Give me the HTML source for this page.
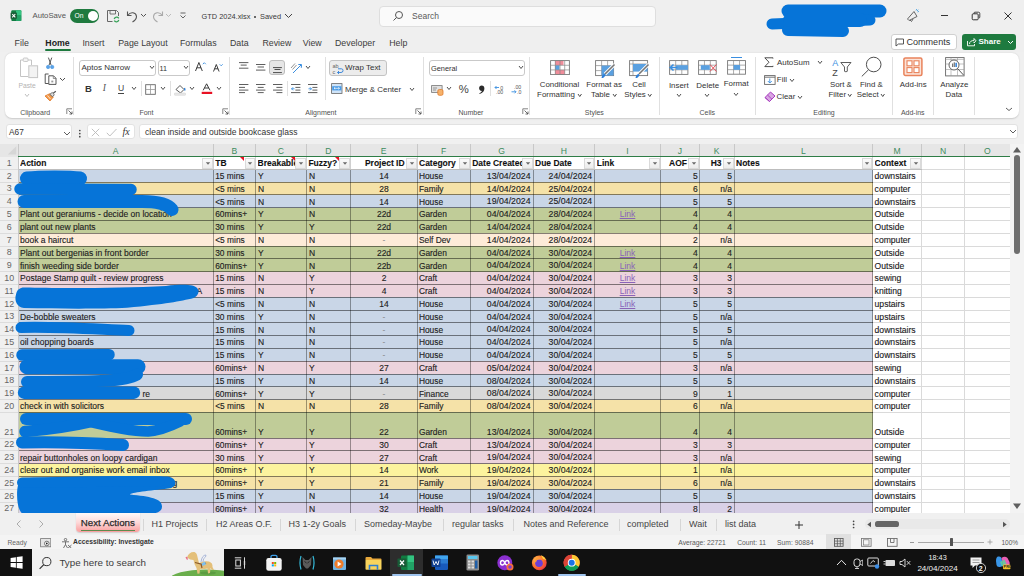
<!DOCTYPE html><html><head><meta charset="utf-8"><style>
html,body{margin:0;padding:0;width:1024px;height:576px;overflow:hidden;background:#f0f0f0;font-family:"Liberation Sans",sans-serif;}
.t{position:absolute;white-space:nowrap;}
.b{position:absolute;}
</style></head><body>
<div class="b" style="left:0.00px;top:0.00px;width:1024.00px;height:52.00px;background:#efefef"></div>
<svg class="b" style="left:9.00px;top:9.00px;" width="14" height="14" viewBox="0 0 14 14"><rect x="2.3" y="1.3" width="10" height="10.7" rx="1" fill="#107c41"/><rect x="7" y="1.3" width="5.3" height="5.3" fill="#33c481"/><rect x="7" y="6.6" width="5.3" height="5.4" fill="#21a366"/><rect x="1.6" y="3.5" width="6.3" height="6.3" rx="0.6" fill="#185c37"/><path d="M3.2,5 L6.3,8.4 M6.3,5 L3.2,8.4" stroke="#fff" stroke-width="1.1"/></svg>
<div class="t" style="left:32.50px;top:12.26px;font-size:7.73px;line-height:7.73px;color:#555;font-weight:normal;">AutoSave</div>
<div class="b" style="left:70.00px;top:8.80px;width:29.00px;height:14.00px;background:#1f7a3f;border-radius:7px"></div>
<div class="t" style="left:74.60px;top:13.29px;font-size:6.75px;line-height:6.75px;color:#ffffff;font-weight:normal;">On</div>
<div class="b" style="left:87.50px;top:11.00px;width:10.00px;height:10.00px;background:#fff;border-radius:50%"></div>
<svg class="b" style="left:106.00px;top:9.00px;" width="15" height="14" viewBox="0 0 15 14"><path d="M1.5,1.5 H10.5 L12.5,3.5 V7 M1.5,1.5 V12.5 H6.5" fill="none" stroke="#666" stroke-width="1"/><path d="M4,1.5 V5 H9.5 V1.5" fill="none" stroke="#666" stroke-width="0.9"/><path d="M8.2,10 A2.6,2.6 0 0 1 12.8,9.3 M12.8,11 A2.6,2.6 0 0 1 8.2,11.7" fill="none" stroke="#3aa35a" stroke-width="1.3"/></svg>
<svg class="b" style="left:125.00px;top:9.00px;" width="14" height="14" viewBox="0 0 14 14"><path d="M2.5,2.5 V6.5 H6.5" fill="none" stroke="#555" stroke-width="1.1"/><path d="M3,6 C5.5,2.5 11,3 11.5,7.5 C11.5,9.5 10,11.5 7.5,13" fill="none" stroke="#555" stroke-width="1.1"/></svg>
<svg class="b" style="left:140.00px;top:13.00px;" width="7" height="5" viewBox="0 0 7 5"><path d="M1,1 L3.5,3.5 L6,1" fill="none" stroke="#555" stroke-width="1"/></svg>
<svg class="b" style="left:151.00px;top:9.00px;" width="14" height="14" viewBox="0 0 14 14"><path d="M11.5,2.5 V6.5 H7.5" fill="none" stroke="#aaa" stroke-width="1.1"/><path d="M11,6 C8.5,2.5 3,3 2.5,7.5 C2.5,9.5 4,11.5 6.5,13" fill="none" stroke="#aaa" stroke-width="1.1"/></svg>
<svg class="b" style="left:165.00px;top:13.00px;" width="7" height="5" viewBox="0 0 7 5"><path d="M1,1 L3.5,3.5 L6,1" fill="none" stroke="#bbb" stroke-width="1"/></svg>
<svg class="b" style="left:178.50px;top:11.00px;" width="8" height="9" viewBox="0 0 8 9"><path d="M1.5,2 H6.5" stroke="#555" stroke-width="0.9"/><path d="M1.5,4.5 L4,7 L6.5,4.5" fill="none" stroke="#555" stroke-width="0.9"/></svg>
<div class="t" style="left:201.60px;top:12.75px;font-size:7.38px;line-height:7.38px;color:#3a3a3a;font-weight:normal;">GTD 2024.xlsx</div>
<div class="b" style="left:254.00px;top:15.50px;width:2.20px;height:2.20px;background:#3a3a3a;border-radius:50%"></div>
<div class="t" style="left:260.00px;top:12.73px;font-size:7.41px;line-height:7.41px;color:#3a3a3a;font-weight:normal;">Saved</div>
<svg class="b" style="left:284.00px;top:13.00px;" width="9" height="6" viewBox="0 0 9 6"><path d="M1,1 L4.5,4.5 L8,1" fill="none" stroke="#444" stroke-width="1"/></svg>
<div class="b" style="left:379.00px;top:5.50px;width:277.00px;height:21.00px;background:#fafafa;border:1px solid #dedede;border-radius:4px;box-sizing:border-box"></div>
<svg class="b" style="left:392.00px;top:10.00px;" width="12" height="12" viewBox="0 0 12 12"><circle cx="7" cy="5" r="3.5" fill="none" stroke="#555" stroke-width="1"/><path d="M4.5,7.5 L1.5,10.5" stroke="#555" stroke-width="1"/></svg>
<div class="t" style="left:412.00px;top:11.79px;font-size:8.52px;line-height:8.52px;color:#5a5a5a;font-weight:normal;">Search</div>
<svg class="b" style="left:750.00px;top:0.00px;" width="150" height="45" viewBox="0 0 150 45"><g fill="none" stroke="#0674d8" stroke-linecap="round" stroke-linejoin="round"><path d="M 38,11 L 130,11" stroke-width="13"/><path d="M 22,24 L 120,20" stroke-width="11"/><path d="M 38,30 L 93,31" stroke-width="12"/><path d="M 40,20 L 110,20" stroke-width="14"/></g></svg>
<svg class="b" style="left:905.00px;top:8.00px;" width="16" height="15" viewBox="0 0 16 15"><path d="M2.5,11 L9,3.5 L12,8.5 L4,12.5 Z" fill="none" stroke="#555" stroke-width="0.9" stroke-linejoin="round"/><path d="M5,12 L6.5,13.5 L8,11" fill="none" stroke="#555" stroke-width="0.9"/><path d="M11,2.5 L11.8,1 M12.5,4 L14,3.3 M12,3 L13.3,1.7" stroke="#3a9ae0" stroke-width="0.8"/></svg>
<div class="b" style="left:940.50px;top:15.00px;width:7.00px;height:1.00px;background:#333"></div>
<svg class="b" style="left:970.00px;top:10.00px;" width="12" height="12" viewBox="0 0 12 12"><rect x="2.2" y="3.8" width="6" height="6" rx="1" fill="none" stroke="#333" stroke-width="1"/><path d="M4,3.8 V3 Q4,2.2 5,2.2 H8.5 Q9.8,2.2 9.8,3.5 V7 Q9.8,8 9,8" fill="none" stroke="#333" stroke-width="0.9"/></svg>
<svg class="b" style="left:1002.00px;top:10.00px;" width="12" height="12" viewBox="0 0 12 12"><path d="M2.5,2.5 L9.5,9.5 M9.5,2.5 L2.5,9.5" stroke="#333" stroke-width="1"/></svg>
<div class="t" style="left:14.60px;top:38.55px;font-size:8.8px;line-height:8.8px;color:#3c3c3c;font-weight:normal;">File</div>
<div class="t" style="left:45.30px;top:38.57px;font-size:8.78px;line-height:8.78px;color:#222;font-weight:bold;">Home</div>
<div class="t" style="left:82.40px;top:38.55px;font-size:8.8px;line-height:8.8px;color:#3c3c3c;font-weight:normal;">Insert</div>
<div class="t" style="left:118.20px;top:38.55px;font-size:8.8px;line-height:8.8px;color:#3c3c3c;font-weight:normal;">Page Layout</div>
<div class="t" style="left:180.00px;top:38.55px;font-size:8.8px;line-height:8.8px;color:#3c3c3c;font-weight:normal;">Formulas</div>
<div class="t" style="left:230.00px;top:38.55px;font-size:8.8px;line-height:8.8px;color:#3c3c3c;font-weight:normal;">Data</div>
<div class="t" style="left:262.40px;top:38.55px;font-size:8.8px;line-height:8.8px;color:#3c3c3c;font-weight:normal;">Review</div>
<div class="t" style="left:302.80px;top:38.55px;font-size:8.8px;line-height:8.8px;color:#3c3c3c;font-weight:normal;">View</div>
<div class="t" style="left:335.00px;top:38.55px;font-size:8.8px;line-height:8.8px;color:#3c3c3c;font-weight:normal;">Developer</div>
<div class="t" style="left:389.20px;top:38.55px;font-size:8.8px;line-height:8.8px;color:#3c3c3c;font-weight:normal;">Help</div>
<div class="b" style="left:45.00px;top:48.50px;width:25.50px;height:2.20px;background:#1e7a3f;border-radius:1px"></div>
<div class="b" style="left:890.50px;top:34.30px;width:66.20px;height:15.50px;background:#fff;border:1px solid #d0d0d0;border-radius:3px;box-sizing:border-box"></div>
<svg class="b" style="left:895.00px;top:37.50px;" width="10" height="9" viewBox="0 0 10 9"><path d="M1,1 H8.5 V6 H3.5 L1,8 Z" fill="none" stroke="#444" stroke-width="0.9"/></svg>
<div class="t" style="left:906.40px;top:37.51px;font-size:9.08px;line-height:9.08px;color:#333;font-weight:normal;">Comments</div>
<div class="b" style="left:962.30px;top:34.30px;width:53.40px;height:15.50px;background:#1e7a3f;border-radius:3px"></div>
<svg class="b" style="left:966.00px;top:37.00px;" width="11" height="10" viewBox="0 0 11 10"><path d="M1.5,4 V8.8 H8.5 V7" fill="none" stroke="#fff" stroke-width="0.9"/><path d="M3.5,7 C3.5,4.5 5.5,3.5 8,3.5 V1.5 L10,3.8 L8,6 V4.8" fill="none" stroke="#fff" stroke-width="0.9"/></svg>
<div class="t" style="left:978.50px;top:38.44px;font-size:7.99px;line-height:7.99px;color:#fff;font-weight:bold;">Share</div>
<svg class="b" style="left:1007.00px;top:40.00px;" width="7" height="5" viewBox="0 0 7 5"><path d="M1,1 L3.5,3.5 L6,1" fill="none" stroke="#fff" stroke-width="1"/></svg>
<div class="b" style="left:5.30px;top:52.80px;width:1013.50px;height:65.00px;background:#fff;border-radius:7px;box-shadow:0 0.8px 1.6px rgba(0,0,0,0.16)"></div>
<svg class="b" style="left:19.00px;top:57.00px;" width="20" height="22" viewBox="0 0 20 22"><path d="M1.5,3 H4 M9,3 H12.5 V8" fill="none" stroke="#c4c4c4" stroke-width="1"/><path d="M1.5,3 V19.5 H9" fill="none" stroke="#c4c4c4" stroke-width="1"/><rect x="4.2" y="1" width="4.8" height="3.5" rx="1" fill="#f3f3f3" stroke="#c4c4c4" stroke-width="0.9"/><rect x="9.8" y="8.8" width="8.8" height="11.8" fill="#f3f3f3" stroke="#c4c4c4" stroke-width="1"/></svg>
<div class="t" style="left:18.50px;top:82.54px;font-size:6.69px;line-height:6.69px;color:#b3b3b3;font-weight:normal;">Paste</div>
<svg class="b" style="left:23.90px;top:93.30px;" width="6" height="5" viewBox="0 0 6 5"><path d="M1,1 L3.0,3.5 L5,1" fill="none" stroke="#bbb" stroke-width="0.95"/></svg>
<svg class="b" style="left:44.00px;top:56.50px;" width="12" height="12.5" viewBox="0 0 12 12.5"><path d="M4.4,0.6 L7.2,8.3 M7.8,0.6 L5,8.3" stroke="#444" stroke-width="0.9"/><circle cx="4.1" cy="10" r="1.7" fill="#5ba3e8" stroke="#3a8ee0" stroke-width="0.5"/><circle cx="8.2" cy="10" r="1.7" fill="#5ba3e8" stroke="#3a8ee0" stroke-width="0.5"/></svg>
<svg class="b" style="left:44.00px;top:73.00px;" width="13" height="12.5" viewBox="0 0 13 12.5"><path d="M4.6,1 H1.2 V10.5 H4.6" fill="none" stroke="#444" stroke-width="0.9"/><path d="M4.8,2.8 H9.5 L12,5.3 V11.4 H4.8 Z" fill="#fff" stroke="#444" stroke-width="0.9"/><path d="M9.3,2.8 V5.5 H12" fill="none" stroke="#666" stroke-width="0.7"/><rect x="7.3" y="7.6" width="2" height="1.8" fill="#999"/></svg>
<svg class="b" style="left:59.00px;top:77.00px;" width="7" height="5" viewBox="0 0 7 5"><path d="M1,1 L3.5,3.5 L6,1" fill="none" stroke="#444" stroke-width="0.95"/></svg>
<svg class="b" style="left:44.00px;top:90.00px;" width="13" height="12" viewBox="0 0 13 12"><path d="M1,6 L5.5,3.8 L9.3,7 L6,11 Z" fill="#f39a4a" stroke="#e0782a" stroke-width="0.8" stroke-linejoin="round"/><path d="M3.5,5.5 L6.5,9" stroke="#fff" stroke-width="0.7"/><path d="M5.8,4.3 L8.2,2.5 L10.3,4.6 L8.6,6.8 Z" fill="#ddd" stroke="#555" stroke-width="0.8"/><path d="M9.2,3.3 L11.8,1.2" stroke="#555" stroke-width="1.2"/></svg>
<div class="t" style="left:-64.85px;width:200px;text-align:center;top:108.77px;font-size:7.0px;line-height:7.0px;color:#505050;font-weight:normal;">Clipboard</div>
<svg class="b" style="left:65.50px;top:108.00px;" width="7" height="7" viewBox="0 0 7 7"><path d="M0.8,6 V0.8 H6" fill="none" stroke="#666" stroke-width="0.8"/><path d="M2.5,2.5 L6,6 M6,3.5 V6 H3.5" fill="none" stroke="#444" stroke-width="0.8"/></svg>
<div class="b" style="left:73.15px;top:56.50px;width:0.70px;height:58.00px;background:#e0e0e0"></div>
<div class="b" style="left:79.40px;top:59.50px;width:76.20px;height:16.20px;border:0.9px solid #c9c9c9;border-radius:3px;box-sizing:border-box;background:#fff"></div>
<div class="t" style="left:81.50px;top:64.22px;font-size:8.01px;line-height:8.01px;color:#333;font-weight:normal;">Aptos Narrow</div>
<svg class="b" style="left:149.00px;top:65.10px;" width="6" height="5" viewBox="0 0 6 5"><path d="M1,1 L3.0,3.5 L5,1" fill="none" stroke="#444" stroke-width="0.95"/></svg>
<div class="b" style="left:157.60px;top:59.50px;width:32.90px;height:16.20px;border:0.9px solid #c9c9c9;border-radius:3px;box-sizing:border-box;background:#fff"></div>
<div class="t" style="left:159.50px;top:64.88px;font-size:7.23px;line-height:7.23px;color:#333;font-weight:normal;">11</div>
<svg class="b" style="left:183.20px;top:65.10px;" width="6" height="5" viewBox="0 0 6 5"><path d="M1,1 L3.0,3.5 L5,1" fill="none" stroke="#444" stroke-width="0.95"/></svg>
<svg class="b" style="left:193.50px;top:61.00px;" width="13" height="11" viewBox="0 0 13 11"><path d="M1.5,10 L4.9,1.5 L8.3,10 M2.8,6.8 H7" fill="none" stroke="#333" stroke-width="0.95"/><path d="M8.8,3.2 L10.3,1.7 L11.8,3.2" fill="none" stroke="#3a8ee0" stroke-width="0.9"/></svg>
<svg class="b" style="left:211.50px;top:62.50px;" width="12" height="9" viewBox="0 0 12 9"><path d="M1.5,8.5 L4.3,1.5 L7.1,8.5 M2.6,5.8 H6" fill="none" stroke="#333" stroke-width="0.95"/><path d="M7.7,1.3 L9.2,2.8 L10.7,1.3" fill="none" stroke="#3a8ee0" stroke-width="0.9"/></svg>
<div class="t" style="left:85.00px;top:83.96px;font-size:9.5px;line-height:9.5px;color:#333;font-weight:bold;">B</div>
<div class="t" style="left:102.80px;top:83.96px;font-size:9.5px;line-height:9.5px;color:#555;font-weight:normal;font-style:italic;font-family:Liberation Serif,serif">I</div>
<div class="t" style="left:118.00px;top:84.12px;font-size:8.6px;line-height:8.6px;color:#444;font-weight:normal;">U</div>
<div class="b" style="left:118.00px;top:92.80px;width:6.20px;height:0.80px;background:#444"></div>
<svg class="b" style="left:131.20px;top:86.40px;" width="6" height="5" viewBox="0 0 6 5"><path d="M1,1 L3.0,3.5 L5,1" fill="none" stroke="#444" stroke-width="0.95"/></svg>
<div class="b" style="left:141.15px;top:81.40px;width:0.70px;height:15.00px;background:#e0e0e0"></div>
<svg class="b" style="left:145.00px;top:83.50px;" width="11" height="11" viewBox="0 0 11 11"><rect x="0.7" y="0.7" width="9.6" height="9.6" fill="none" stroke="#666" stroke-width="0.9"/><path d="M5.5,0.7 V10.3 M0.7,5.5 H10.3" stroke="#999" stroke-width="0.8"/></svg>
<svg class="b" style="left:159.80px;top:86.40px;" width="6" height="5" viewBox="0 0 6 5"><path d="M1,1 L3.0,3.5 L5,1" fill="none" stroke="#444" stroke-width="0.95"/></svg>
<div class="b" style="left:169.55px;top:81.40px;width:0.70px;height:15.00px;background:#e0e0e0"></div>
<svg class="b" style="left:173.50px;top:82.50px;" width="13" height="13" viewBox="0 0 13 13"><path d="M2,6.5 L6,2.5 L10,6.5 L6.5,10 Z" fill="none" stroke="#444" stroke-width="0.9"/><path d="M10.5,5 L11,7.5" stroke="#2d7fd8" stroke-width="1.3"/><rect x="0.5" y="10" width="11" height="2.3" rx="0.6" fill="#e8e8e8" stroke="#cfcfcf" stroke-width="0.5"/></svg>
<svg class="b" style="left:188.80px;top:86.40px;" width="6" height="5" viewBox="0 0 6 5"><path d="M1,1 L3.0,3.5 L5,1" fill="none" stroke="#444" stroke-width="0.95"/></svg>
<svg class="b" style="left:200.50px;top:83.00px;" width="12" height="11" viewBox="0 0 12 11"><path d="M2.2,7.3 L5.6,0.8 L9,7.3 M3.4,5 H7.8" fill="none" stroke="#333" stroke-width="0.95"/><rect x="0.7" y="8.8" width="10.5" height="2.2" fill="#e81123"/></svg>
<svg class="b" style="left:216.00px;top:86.40px;" width="6" height="5" viewBox="0 0 6 5"><path d="M1,1 L3.0,3.5 L5,1" fill="none" stroke="#444" stroke-width="0.95"/></svg>
<div class="t" style="left:46.45px;width:200px;text-align:center;top:108.77px;font-size:7.0px;line-height:7.0px;color:#505050;font-weight:normal;">Font</div>
<svg class="b" style="left:221.50px;top:108.00px;" width="7" height="7" viewBox="0 0 7 7"><path d="M0.8,6 V0.8 H6" fill="none" stroke="#666" stroke-width="0.8"/><path d="M2.5,2.5 L6,6 M6,3.5 V6 H3.5" fill="none" stroke="#444" stroke-width="0.8"/></svg>
<div class="b" style="left:229.15px;top:56.50px;width:0.70px;height:58.00px;background:#e0e0e0"></div>
<svg class="b" style="left:238.50px;top:60.00px;" width="10" height="10" viewBox="0 0 10 10"><path d="M0,2.6 H9.4" stroke="#555" stroke-width="0.95"/><path d="M1.7,5.1 H7.7" stroke="#555" stroke-width="0.95"/><path d="M0,8.2 H9.4" stroke="#555" stroke-width="0.95"/></svg>
<svg class="b" style="left:255.60px;top:62.00px;" width="10" height="10" viewBox="0 0 10 10"><path d="M0,2.5 H9.4" stroke="#555" stroke-width="0.95"/><path d="M1.5,5 H8.0" stroke="#555" stroke-width="0.95"/><path d="M0,8.1 H9.4" stroke="#555" stroke-width="0.95"/></svg>
<div class="b" style="left:269.40px;top:59.80px;width:15.60px;height:15.70px;background:#e6e6e6;border:0.9px solid #bdbdbd;border-radius:3px;box-sizing:border-box"></div>
<svg class="b" style="left:273.00px;top:65.00px;" width="10" height="10" viewBox="0 0 10 10"><path d="M0,2.6 H8.9" stroke="#444" stroke-width="0.95"/><path d="M1.5,4.5 H7.5" stroke="#444" stroke-width="0.95"/><path d="M0,7.6 H8.9" stroke="#444" stroke-width="0.95"/></svg>
<svg class="b" style="left:290.00px;top:61.50px;" width="13" height="12" viewBox="0 0 13 12"><path d="M1,6 L5,1.5 M2.5,7.5 L6.5,3" stroke="#777" stroke-width="0.8"/><path d="M3,11 L11,3" stroke="#3a8ee0" stroke-width="1"/><path d="M8.3,2.5 L11.5,2.5 L11.3,5.8" fill="none" stroke="#3a8ee0" stroke-width="1"/></svg>
<svg class="b" style="left:304.50px;top:65.10px;" width="6" height="5" viewBox="0 0 6 5"><path d="M1,1 L3.0,3.5 L5,1" fill="none" stroke="#444" stroke-width="0.95"/></svg>
<svg class="b" style="left:238.50px;top:83.00px;" width="10" height="11" viewBox="0 0 10 11"><path d="M0,1.5 H9.4" stroke="#555" stroke-width="0.95"/><path d="M0,4.4 H6" stroke="#555" stroke-width="0.95"/><path d="M0,7.1 H9.4" stroke="#555" stroke-width="0.95"/><path d="M0,9.6 H6" stroke="#555" stroke-width="0.95"/></svg>
<svg class="b" style="left:255.60px;top:83.00px;" width="10" height="11" viewBox="0 0 10 11"><path d="M0,1.5 H9.4" stroke="#555" stroke-width="0.95"/><path d="M1.7,4.4 H7.7" stroke="#555" stroke-width="0.95"/><path d="M0,7.1 H9.4" stroke="#555" stroke-width="0.95"/><path d="M1.7,9.6 H7.7" stroke="#555" stroke-width="0.95"/></svg>
<svg class="b" style="left:272.50px;top:83.00px;" width="10" height="11" viewBox="0 0 10 11"><path d="M0,1.5 H9.4" stroke="#555" stroke-width="0.95"/><path d="M3.4,4.4 H9.4" stroke="#555" stroke-width="0.95"/><path d="M0,7.1 H9.4" stroke="#555" stroke-width="0.95"/><path d="M3.4,9.6 H9.4" stroke="#555" stroke-width="0.95"/></svg>
<div class="b" style="left:286.55px;top:81.40px;width:0.70px;height:15.00px;background:#e0e0e0"></div>
<svg class="b" style="left:291.00px;top:83.00px;" width="10" height="11" viewBox="0 0 10 11"><path d="M0,1.5 H9.4" stroke="#555" stroke-width="0.95"/><path d="M4.4,4.4 H9.4" stroke="#555" stroke-width="0.95"/><path d="M4.4,7.1 H9.4" stroke="#555" stroke-width="0.95"/><path d="M0,9.6 H9.4" stroke="#555" stroke-width="0.95"/><path d="M0.5,5.8 H3.5 M2,4.3 L0.5,5.8 L2,7.3" fill="none" stroke="#3a8ee0" stroke-width="0.9"/></svg>
<svg class="b" style="left:308.00px;top:83.00px;" width="10" height="11" viewBox="0 0 10 11"><path d="M0,1.5 H9.4" stroke="#555" stroke-width="0.95"/><path d="M4.4,4.4 H9.4" stroke="#555" stroke-width="0.95"/><path d="M4.4,7.1 H9.4" stroke="#555" stroke-width="0.95"/><path d="M0,9.6 H9.4" stroke="#555" stroke-width="0.95"/><path d="M0.5,5.8 H3.5 M2,4.3 L3.5,5.8 L2,7.3" fill="none" stroke="#3a8ee0" stroke-width="0.9"/></svg>
<div class="b" style="left:324.65px;top:57.00px;width:0.70px;height:43.00px;background:#e0e0e0"></div>
<div class="b" style="left:329.00px;top:59.50px;width:57.50px;height:16.00px;background:#ececec;border:0.9px solid #c3c3c3;border-radius:3px;box-sizing:border-box"></div>
<svg class="b" style="left:332.00px;top:62.50px;" width="12" height="11" viewBox="0 0 12 11"><text x="0.5" y="5" font-size="5.5" font-family="Liberation Sans" fill="#666">ab</text><text x="0.5" y="10.5" font-size="5.5" font-family="Liberation Sans" fill="#666">c</text><path d="M6,5.8 H9.5 Q11,5.8 11,7.5 Q11,9.5 9,9.5 H5.5 M7,8 L5.5,9.5 L7,11" fill="none" stroke="#2d7fd8" stroke-width="0.9"/></svg>
<div class="t" style="left:345.00px;top:64.25px;font-size:7.97px;line-height:7.97px;color:#333;font-weight:normal;">Wrap Text</div>
<svg class="b" style="left:331.00px;top:83.30px;" width="12" height="11" viewBox="0 0 12 11"><rect x="0.6" y="0.6" width="10.4" height="9.8" fill="#cfe3f7" stroke="#666" stroke-width="0.8"/><rect x="1.2" y="3.2" width="9.2" height="4.2" fill="#4a9be6"/><path d="M3,5.3 H8.5 M4.2,4.3 L3,5.3 L4.2,6.3 M7.3,4.3 L8.5,5.3 L7.3,6.3" fill="none" stroke="#fff" stroke-width="0.7"/></svg>
<div class="t" style="left:345.00px;top:85.56px;font-size:7.96px;line-height:7.96px;color:#333;font-weight:normal;">Merge &amp; Center</div>
<svg class="b" style="left:409.00px;top:86.60px;" width="6" height="5" viewBox="0 0 6 5"><path d="M1,1 L3.0,3.5 L5,1" fill="none" stroke="#444" stroke-width="0.95"/></svg>
<div class="t" style="left:220.90px;width:200px;text-align:center;top:108.77px;font-size:7.0px;line-height:7.0px;color:#505050;font-weight:normal;">Alignment</div>
<svg class="b" style="left:415.00px;top:108.00px;" width="7" height="7" viewBox="0 0 7 7"><path d="M0.8,6 V0.8 H6" fill="none" stroke="#666" stroke-width="0.8"/><path d="M2.5,2.5 L6,6 M6,3.5 V6 H3.5" fill="none" stroke="#444" stroke-width="0.8"/></svg>
<div class="b" style="left:422.75px;top:56.50px;width:0.70px;height:58.00px;background:#e0e0e0"></div>
<div class="b" style="left:429.00px;top:59.50px;width:95.80px;height:16.20px;border:0.9px solid #c9c9c9;border-radius:3px;box-sizing:border-box;background:#fff"></div>
<div class="t" style="left:431.00px;top:64.76px;font-size:7.37px;line-height:7.37px;color:#333;font-weight:normal;">General</div>
<svg class="b" style="left:517.60px;top:65.10px;" width="6" height="5" viewBox="0 0 6 5"><path d="M1,1 L3.0,3.5 L5,1" fill="none" stroke="#444" stroke-width="0.95"/></svg>
<svg class="b" style="left:430.50px;top:84.50px;" width="13" height="11" viewBox="0 0 13 11"><rect x="0.6" y="0.6" width="10.5" height="6.8" fill="#e0e0e0" stroke="#777" stroke-width="0.8"/><path d="M2,3 H6 M2,5 H5" stroke="#777" stroke-width="0.7"/><rect x="6.8" y="4.5" width="5.2" height="5.8" rx="1.5" fill="#f6b26b" stroke="#e07a2a" stroke-width="0.8"/></svg>
<svg class="b" style="left:446.40px;top:86.40px;" width="6" height="5" viewBox="0 0 6 5"><path d="M1,1 L3.0,3.5 L5,1" fill="none" stroke="#444" stroke-width="0.95"/></svg>
<div class="t" style="left:458.80px;top:84.33px;font-size:11.3px;line-height:11.3px;color:#444;font-weight:normal;">%</div>
<svg class="b" style="left:478.00px;top:84.50px;" width="7" height="9.5" viewBox="0 0 7 9.5"><path d="M3.6,0.6 C5.4,0.6 6.4,1.9 6.4,3.6 C6.4,6 5,8 1.6,9 L1.3,8.2 C3,7.4 3.8,6.6 3.9,5.9 C2.3,5.9 1.1,4.9 1.1,3.3 C1.1,1.7 2.2,0.6 3.6,0.6 Z" fill="#2b2b2b"/></svg>
<div class="b" style="left:490.25px;top:81.40px;width:0.70px;height:15.00px;background:#e0e0e0"></div>
<svg class="b" style="left:494.00px;top:83.50px;" width="12" height="11" viewBox="0 0 12 11"><path d="M1,3.5 H5 M2.5,2 L1,3.5 L2.5,5" fill="none" stroke="#3a8ee0" stroke-width="0.9"/><text x="6.3" y="5.5" font-size="5.2" font-family="Liberation Sans" fill="#555">0</text><text x="2" y="10.3" font-size="5.2" font-family="Liberation Sans" fill="#555">.00</text></svg>
<svg class="b" style="left:511.00px;top:83.50px;" width="12" height="11" viewBox="0 0 12 11"><text x="3" y="5" font-size="5.2" font-family="Liberation Sans" fill="#555">.00</text><path d="M0.5,7.8 H5 M3.5,6.3 L5,7.8 L3.5,9.3" fill="none" stroke="#3a8ee0" stroke-width="0.9"/><text x="6" y="10.3" font-size="5.2" font-family="Liberation Sans" fill="#555">.0</text></svg>
<div class="t" style="left:371.00px;width:200px;text-align:center;top:108.77px;font-size:7.0px;line-height:7.0px;color:#505050;font-weight:normal;">Number</div>
<svg class="b" style="left:521.50px;top:108.00px;" width="7" height="7" viewBox="0 0 7 7"><path d="M0.8,6 V0.8 H6" fill="none" stroke="#666" stroke-width="0.8"/><path d="M2.5,2.5 L6,6 M6,3.5 V6 H3.5" fill="none" stroke="#444" stroke-width="0.8"/></svg>
<div class="b" style="left:529.40px;top:56.50px;width:0.70px;height:58.00px;background:#e0e0e0"></div>
<svg class="b" style="left:550.20px;top:59.70px;" width="20" height="15.2" viewBox="0 0 20 15.2"><rect x="5" y="0.6" width="8.5" height="4.6" fill="#f08d9a"/><rect x="5" y="9.9" width="9.8" height="4.6" fill="#f08d9a"/><rect x="5" y="5.2" width="4.5" height="4.7" fill="#5aa0e0"/><rect x="0.6" y="0.6" width="18.8" height="14.0" fill="none" stroke="#777" stroke-width="0.9"/><path d="M5.30,0.6 V14.6" stroke="#888" stroke-width="0.7"/><path d="M10.00,0.6 V14.6" stroke="#888" stroke-width="0.7"/><path d="M14.70,0.6 V14.6" stroke="#888" stroke-width="0.7"/><path d="M0.6,5.27 H19.4" stroke="#888" stroke-width="0.7"/><path d="M0.6,9.93 H19.4" stroke="#888" stroke-width="0.7"/></svg>
<div class="t" style="left:459.50px;width:200px;text-align:center;top:80.51px;font-size:7.9px;line-height:7.9px;color:#333;font-weight:normal;">Conditional</div>
<div class="t" style="left:455.95px;width:200px;text-align:center;top:91.31px;font-size:7.9px;line-height:7.9px;color:#333;font-weight:normal;">Formatting</div>
<svg class="b" style="left:577.25px;top:93.00px;" width="5.5" height="5" viewBox="0 0 5.5 5"><path d="M1,1 L2.75,3.5 L4.5,1" fill="none" stroke="#444" stroke-width="0.95"/></svg>
<svg class="b" style="left:594.70px;top:59.70px;" width="21" height="18.5" viewBox="0 0 21 18.5"><rect x="0.6" y="0.6" width="18" height="15" fill="none" stroke="#777" stroke-width="0.9"/><path d="M6.6,0.6 V15.6 M12.6,0.6 V15.6 M0.6,5.6 H18.6 M0.6,10.6 H18.6" stroke="#888" stroke-width="0.7"/><rect x="6.6" y="5.6" width="12" height="10" fill="#5aa0e0"/><path d="M10,14 L19.5,4.5" stroke="#fff" stroke-width="3.2"/><path d="M10,14 L19.5,4.5" stroke="#777" stroke-width="1.6"/><path d="M6.5,18 Q7,14 10,14 Q11,16 8,18 Z" fill="#2d7fd8"/></svg>
<div class="t" style="left:504.10px;width:200px;text-align:center;top:80.51px;font-size:7.9px;line-height:7.9px;color:#333;font-weight:normal;">Format as</div>
<div class="t" style="left:500.45px;width:200px;text-align:center;top:91.31px;font-size:7.9px;line-height:7.9px;color:#333;font-weight:normal;">Table</div>
<svg class="b" style="left:611.65px;top:93.00px;" width="5.5" height="5" viewBox="0 0 5.5 5"><path d="M1,1 L2.75,3.5 L4.5,1" fill="none" stroke="#444" stroke-width="0.95"/></svg>
<svg class="b" style="left:629.40px;top:59.70px;" width="21" height="18.5" viewBox="0 0 21 18.5"><rect x="0.6" y="0.6" width="18" height="15" fill="none" stroke="#777" stroke-width="0.9"/><path d="M4,0.6 V15.6 M0.6,4 H18.6 M0.6,11.6 H4" stroke="#888" stroke-width="0.7"/><rect x="4" y="4" width="14.6" height="7.6" fill="#5aa0e0"/><path d="M10,14 L19.5,4.5" stroke="#fff" stroke-width="3.2"/><path d="M10,14 L19.5,4.5" stroke="#777" stroke-width="1.6"/><path d="M6.5,18 Q7,14 10,14 Q11,16 8,18 Z" fill="#2d7fd8"/></svg>
<div class="t" style="left:539.05px;width:200px;text-align:center;top:80.51px;font-size:7.9px;line-height:7.9px;color:#333;font-weight:normal;">Cell</div>
<div class="t" style="left:535.05px;width:200px;text-align:center;top:91.31px;font-size:7.9px;line-height:7.9px;color:#333;font-weight:normal;">Styles</div>
<svg class="b" style="left:646.95px;top:93.00px;" width="5.5" height="5" viewBox="0 0 5.5 5"><path d="M1,1 L2.75,3.5 L4.5,1" fill="none" stroke="#444" stroke-width="0.95"/></svg>
<div class="t" style="left:494.35px;width:200px;text-align:center;top:108.77px;font-size:7.0px;line-height:7.0px;color:#505050;font-weight:normal;">Styles</div>
<div class="b" style="left:659.40px;top:56.50px;width:0.70px;height:58.00px;background:#e0e0e0"></div>
<svg class="b" style="left:669.00px;top:59.70px;" width="19.5" height="15" viewBox="0 0 19.5 15"><rect x="0.6" y="0.6" width="18.3" height="13.8" fill="none" stroke="#777" stroke-width="0.9"/><path d="M6.70,0.6 V14.4" stroke="#888" stroke-width="0.7"/><path d="M12.80,0.6 V14.4" stroke="#888" stroke-width="0.7"/><path d="M0.6,5.20 H18.9" stroke="#888" stroke-width="0.7"/><path d="M0.6,9.80 H18.9" stroke="#888" stroke-width="0.7"/><rect x="7" y="5.2" width="12" height="4.6" fill="#5aa0e0"/><path d="M8.5,7.5 H1.5 M4.5,4.5 L1.2,7.5 L4.5,10.5" fill="none" stroke="#3a8ee0" stroke-width="1.6"/></svg>
<div class="t" style="left:578.75px;width:200px;text-align:center;top:81.51px;font-size:7.9px;line-height:7.9px;color:#333;font-weight:normal;">Insert</div>
<svg class="b" style="left:675.50px;top:93.20px;" width="6" height="5" viewBox="0 0 6 5"><path d="M1,1 L3.0,3.5 L5,1" fill="none" stroke="#444" stroke-width="0.95"/></svg>
<svg class="b" style="left:698.10px;top:59.70px;" width="18.8" height="15" viewBox="0 0 18.8 15"><rect x="0.6" y="0.6" width="17.6" height="13.8" fill="none" stroke="#777" stroke-width="0.9"/><path d="M6.47,0.6 V14.4" stroke="#888" stroke-width="0.7"/><path d="M12.33,0.6 V14.4" stroke="#888" stroke-width="0.7"/><path d="M0.6,5.20 H18.2" stroke="#888" stroke-width="0.7"/><path d="M0.6,9.80 H18.2" stroke="#888" stroke-width="0.7"/><rect x="2.8" y="5.2" width="9" height="4.6" fill="#5aa0e0"/><path d="M12,4.5 L18.5,11.5 M18.5,4.5 L12,11.5" stroke="#e8505a" stroke-width="1"/></svg>
<div class="t" style="left:607.75px;width:200px;text-align:center;top:81.51px;font-size:7.9px;line-height:7.9px;color:#333;font-weight:normal;">Delete</div>
<svg class="b" style="left:704.20px;top:93.20px;" width="6" height="5" viewBox="0 0 6 5"><path d="M1,1 L3.0,3.5 L5,1" fill="none" stroke="#444" stroke-width="0.95"/></svg>
<svg class="b" style="left:726.90px;top:60.00px;" width="19.1" height="14.8" viewBox="0 0 19.1 14.8"><rect x="0.6" y="0.6" width="17.900000000000002" height="13.600000000000001" fill="none" stroke="#777" stroke-width="0.9"/><path d="M6.57,0.6 V14.200000000000001" stroke="#888" stroke-width="0.7"/><path d="M12.53,0.6 V14.200000000000001" stroke="#888" stroke-width="0.7"/><path d="M0.6,5.13 H18.5" stroke="#888" stroke-width="0.7"/><path d="M0.6,9.67 H18.5" stroke="#888" stroke-width="0.7"/><rect x="6.6" y="5" width="6.5" height="4.8" fill="#5aa0e0"/></svg>
<div class="b" style="left:731.20px;top:57.00px;width:10.70px;height:0.90px;background:#3a8ee0"></div>
<div class="t" style="left:636.20px;width:200px;text-align:center;top:80.31px;font-size:7.9px;line-height:7.9px;color:#333;font-weight:normal;">Format</div>
<svg class="b" style="left:733.00px;top:92.20px;" width="6" height="5" viewBox="0 0 6 5"><path d="M1,1 L3.0,3.5 L5,1" fill="none" stroke="#444" stroke-width="0.95"/></svg>
<div class="t" style="left:607.25px;width:200px;text-align:center;top:108.77px;font-size:7.0px;line-height:7.0px;color:#505050;font-weight:normal;">Cells</div>
<div class="b" style="left:755.25px;top:56.50px;width:0.70px;height:58.00px;background:#e0e0e0"></div>
<svg class="b" style="left:764.00px;top:57.00px;" width="10" height="10.5" viewBox="0 0 10 10.5"><path d="M9,1.5 V0.8 H0.8 L5,5.2 L0.8,9.6 H9 V8.8" fill="none" stroke="#444" stroke-width="0.95"/></svg>
<div class="t" style="left:693.25px;width:200px;text-align:center;top:58.81px;font-size:7.9px;line-height:7.9px;color:#333;font-weight:normal;">AutoSum</div>
<svg class="b" style="left:817.00px;top:60.10px;" width="6" height="5" viewBox="0 0 6 5"><path d="M1,1 L3.0,3.5 L5,1" fill="none" stroke="#444" stroke-width="0.95"/></svg>
<svg class="b" style="left:763.50px;top:74.50px;" width="12" height="10" viewBox="0 0 12 10"><rect x="0.6" y="0.6" width="10.5" height="8.8" fill="#fff" stroke="#666" stroke-width="0.9"/><path d="M0.6,2.2 H11.1" stroke="#666" stroke-width="0.9"/><path d="M5.8,3.5 V8 M3.8,6 L5.8,8 L7.8,6" fill="none" stroke="#3a8ee0" stroke-width="0.9"/></svg>
<div class="t" style="left:681.90px;width:200px;text-align:center;top:75.91px;font-size:7.9px;line-height:7.9px;color:#333;font-weight:normal;">Fill</div>
<svg class="b" style="left:788.90px;top:77.50px;" width="6" height="5" viewBox="0 0 6 5"><path d="M1,1 L3.0,3.5 L5,1" fill="none" stroke="#444" stroke-width="0.95"/></svg>
<svg class="b" style="left:763.50px;top:91.00px;" width="12" height="11" viewBox="0 0 12 11"><path d="M1,6.5 L6.5,1 L11,5 L5.5,10.5 Z" fill="#d9a6e3" stroke="#a83fbf" stroke-width="1"/><path d="M3.5,4 L8,8.3" stroke="#a83fbf" stroke-width="0.9"/><path d="M1,6.5 L3.8,9 L5.5,10.5" fill="#a83fbf" stroke="#a83fbf"/></svg>
<div class="t" style="left:685.95px;width:200px;text-align:center;top:93.01px;font-size:7.9px;line-height:7.9px;color:#333;font-weight:normal;">Clear</div>
<svg class="b" style="left:796.70px;top:94.60px;" width="6" height="5" viewBox="0 0 6 5"><path d="M1,1 L3.0,3.5 L5,1" fill="none" stroke="#444" stroke-width="0.95"/></svg>
<svg class="b" style="left:830.50px;top:58.00px;" width="22" height="19" viewBox="0 0 22 19"><text x="1.2" y="8" font-size="9" font-family="Liberation Sans" fill="#3a8ee0">A</text><text x="1.2" y="17.6" font-size="9" font-family="Liberation Sans" fill="#444">Z</text><path d="M9.8,4.5 H20 L16.3,9 V13.3 Q15,14.3 13.5,13.3 V9 Z" fill="none" stroke="#555" stroke-width="0.95" stroke-linejoin="round"/></svg>
<div class="t" style="left:740.85px;width:200px;text-align:center;top:80.51px;font-size:7.9px;line-height:7.9px;color:#333;font-weight:normal;">Sort &amp;</div>
<div class="t" style="left:737.25px;width:200px;text-align:center;top:91.31px;font-size:7.9px;line-height:7.9px;color:#333;font-weight:normal;">Filter</div>
<svg class="b" style="left:847.45px;top:93.00px;" width="5.5" height="5" viewBox="0 0 5.5 5"><path d="M1,1 L2.75,3.5 L4.5,1" fill="none" stroke="#444" stroke-width="0.95"/></svg>
<svg class="b" style="left:860.00px;top:56.00px;" width="24" height="22" viewBox="0 0 24 22"><circle cx="13.7" cy="8.5" r="7.3" fill="none" stroke="#444" stroke-width="0.95"/><path d="M8.6,13.7 L1.8,20.4" stroke="#444" stroke-width="0.95"/></svg>
<div class="t" style="left:771.40px;width:200px;text-align:center;top:80.51px;font-size:7.9px;line-height:7.9px;color:#333;font-weight:normal;">Find &amp;</div>
<div class="t" style="left:767.65px;width:200px;text-align:center;top:91.31px;font-size:7.9px;line-height:7.9px;color:#333;font-weight:normal;">Select</div>
<svg class="b" style="left:880.35px;top:93.00px;" width="5.5" height="5" viewBox="0 0 5.5 5"><path d="M1,1 L2.75,3.5 L4.5,1" fill="none" stroke="#444" stroke-width="0.95"/></svg>
<div class="t" style="left:724.00px;width:200px;text-align:center;top:108.77px;font-size:7.0px;line-height:7.0px;color:#505050;font-weight:normal;">Editing</div>
<div class="b" style="left:892.25px;top:56.50px;width:0.70px;height:58.00px;background:#e0e0e0"></div>
<svg class="b" style="left:903.00px;top:57.30px;" width="20" height="19.5" viewBox="0 0 20 19.5"><rect x="0.9" y="0.9" width="18" height="17.5" rx="1.5" fill="#fbe3d8" stroke="#e9835b" stroke-width="1.5"/><rect x="4" y="3.8" width="5" height="5" fill="#fff" stroke="#e9835b" stroke-width="1.1"/><rect x="11" y="3.8" width="5" height="5" fill="#fff" stroke="#e9835b" stroke-width="1.1"/><rect x="4" y="10.6" width="5" height="5" fill="#fff" stroke="#e9835b" stroke-width="1.1"/><rect x="11" y="10.6" width="5" height="5" fill="#fff" stroke="#e9835b" stroke-width="1.1"/></svg>
<div class="t" style="left:813.25px;width:200px;text-align:center;top:80.91px;font-size:7.9px;line-height:7.9px;color:#333;font-weight:normal;">Add-ins</div>
<div class="t" style="left:812.75px;width:200px;text-align:center;top:108.77px;font-size:7.0px;line-height:7.0px;color:#505050;font-weight:normal;">Add-ins</div>
<div class="b" style="left:933.45px;top:56.50px;width:0.70px;height:58.00px;background:#e0e0e0"></div>
<svg class="b" style="left:944.50px;top:57.30px;" width="20" height="19.5" viewBox="0 0 20 19.5"><rect x="0.6" y="0.6" width="18.5" height="18.3" fill="none" stroke="#666" stroke-width="0.9"/><path d="M0.6,2.4 H19 M0.6,7 H19 M0.6,12.5 H19 M6,0.6 V19 M12.5,0.6 V19" stroke="#999" stroke-width="0.6"/><circle cx="9" cy="8" r="5" fill="#fff" stroke="#555" stroke-width="0.9"/><rect x="7" y="6.5" width="1.2" height="3.5" fill="#777"/><rect x="8.7" y="5.3" width="1.2" height="4.7" fill="#777"/><rect x="10.4" y="5.8" width="1.5" height="4.2" fill="#2d7fd8"/><path d="M12.5,11.5 L18.5,18" stroke="#555" stroke-width="1"/></svg>
<div class="t" style="left:854.25px;width:200px;text-align:center;top:80.91px;font-size:7.9px;line-height:7.9px;color:#333;font-weight:normal;">Analyze</div>
<div class="t" style="left:853.95px;width:200px;text-align:center;top:91.11px;font-size:7.9px;line-height:7.9px;color:#333;font-weight:normal;">Data</div>
<div class="b" style="left:974.25px;top:56.50px;width:0.70px;height:58.00px;background:#e0e0e0"></div>
<svg class="b" style="left:1004.80px;top:106.60px;" width="8" height="5" viewBox="0 0 8 5"><path d="M1,1 L4.0,3.5 L7,1" fill="none" stroke="#555" stroke-width="0.95"/></svg>
<div class="b" style="left:5.90px;top:124.20px;width:66.30px;height:14.90px;background:#fff;border:0.8px solid #e2e2e2;border-radius:3px;box-sizing:border-box"></div>
<div class="t" style="left:9.00px;top:127.88px;font-size:8.29px;line-height:8.29px;color:#333;font-weight:normal;">A67</div>
<svg class="b" style="left:62.50px;top:130.50px;" width="8" height="5" viewBox="0 0 8 5"><path d="M1,1 L4,4 L7,1" fill="none" stroke="#555" stroke-width="0.95"/></svg>
<svg class="b" style="left:78.00px;top:128.50px;" width="4" height="10" viewBox="0 0 4 10"><circle cx="1.8" cy="1.5" r="0.85" fill="#444"/><circle cx="1.8" cy="4.6" r="0.85" fill="#444"/><circle cx="1.8" cy="7.7" r="0.85" fill="#444"/></svg>
<div class="b" style="left:86.70px;top:124.20px;width:48.00px;height:14.90px;background:#fff;border:0.8px solid #e2e2e2;border-radius:3px;box-sizing:border-box"></div>
<svg class="b" style="left:90.50px;top:128.00px;" width="9" height="9" viewBox="0 0 9 9"><path d="M0.8,0.8 L8.2,8.2 M8.2,0.8 L0.8,8.2" stroke="#b9b9b9" stroke-width="0.9"/></svg>
<svg class="b" style="left:105.50px;top:128.00px;" width="11" height="9" viewBox="0 0 11 9"><path d="M0.8,4.8 L3.8,8 L10.5,1" fill="none" stroke="#b9b9b9" stroke-width="0.9"/></svg>
<div class="t" style="left:122.50px;top:127.34px;font-size:10px;line-height:10px;color:#333;font-weight:normal;font-family:Liberation Serif,serif;font-style:italic">fx</div>
<div class="b" style="left:138.70px;top:124.00px;width:879.30px;height:15.20px;background:#fff;border:0.8px solid #e2e2e2;border-radius:3px;box-sizing:border-box"></div>
<div class="t" style="left:145.00px;top:127.69px;font-size:8.52px;line-height:8.52px;color:#333;font-weight:normal;">clean inside and outside bookcase glass</div>
<svg class="b" style="left:1009.00px;top:128.50px;" width="8" height="5" viewBox="0 0 8 5"><path d="M1,1 L4,4 L7,1" fill="none" stroke="#555" stroke-width="0.95"/></svg>
<div class="b" style="left:0.00px;top:144.00px;width:1010.00px;height:369.00px;background:#ffffff"></div>
<div class="b" style="left:0.00px;top:144.00px;width:1010.00px;height:12.50px;background:#e6e6e6"></div>
<div class="b" style="left:0.00px;top:156.50px;width:18.00px;height:356.50px;background:#f0f0f0"></div>
<svg class="b" style="left:0.00px;top:144.00px;" width="18" height="13" viewBox="0 0 18 13"><polygon points="16.3,2.2 16.3,10.4 7.8,10.4" fill="#d6d6d6"/></svg>
<div class="t" style="left:15.65px;width:200px;text-align:center;top:146.52px;font-size:8.6px;line-height:8.6px;color:#3d8b5e;font-weight:normal;">A</div>
<div class="b" style="left:212.80px;top:144.00px;width:1.00px;height:12.50px;background:#c8c8c8"></div>
<div class="t" style="left:134.40px;width:200px;text-align:center;top:146.52px;font-size:8.6px;line-height:8.6px;color:#3d8b5e;font-weight:normal;">B</div>
<div class="b" style="left:255.00px;top:144.00px;width:1.00px;height:12.50px;background:#c8c8c8"></div>
<div class="t" style="left:180.95px;width:200px;text-align:center;top:146.52px;font-size:8.6px;line-height:8.6px;color:#3d8b5e;font-weight:normal;">C</div>
<div class="b" style="left:305.90px;top:144.00px;width:1.00px;height:12.50px;background:#c8c8c8"></div>
<div class="t" style="left:228.35px;width:200px;text-align:center;top:146.52px;font-size:8.6px;line-height:8.6px;color:#3d8b5e;font-weight:normal;">D</div>
<div class="b" style="left:349.80px;top:144.00px;width:1.00px;height:12.50px;background:#c8c8c8"></div>
<div class="t" style="left:283.65px;width:200px;text-align:center;top:146.52px;font-size:8.6px;line-height:8.6px;color:#3d8b5e;font-weight:normal;">E</div>
<div class="b" style="left:416.50px;top:144.00px;width:1.00px;height:12.50px;background:#c8c8c8"></div>
<div class="t" style="left:343.60px;width:200px;text-align:center;top:146.52px;font-size:8.6px;line-height:8.6px;color:#3d8b5e;font-weight:normal;">F</div>
<div class="b" style="left:469.70px;top:144.00px;width:1.00px;height:12.50px;background:#c8c8c8"></div>
<div class="t" style="left:401.60px;width:200px;text-align:center;top:146.52px;font-size:8.6px;line-height:8.6px;color:#3d8b5e;font-weight:normal;">G</div>
<div class="b" style="left:532.50px;top:144.00px;width:1.00px;height:12.50px;background:#c8c8c8"></div>
<div class="t" style="left:463.85px;width:200px;text-align:center;top:146.52px;font-size:8.6px;line-height:8.6px;color:#3d8b5e;font-weight:normal;">H</div>
<div class="b" style="left:594.20px;top:144.00px;width:1.00px;height:12.50px;background:#c8c8c8"></div>
<div class="t" style="left:527.45px;width:200px;text-align:center;top:146.52px;font-size:8.6px;line-height:8.6px;color:#3d8b5e;font-weight:normal;">I</div>
<div class="b" style="left:659.70px;top:144.00px;width:1.00px;height:12.50px;background:#c8c8c8"></div>
<div class="t" style="left:579.80px;width:200px;text-align:center;top:146.52px;font-size:8.6px;line-height:8.6px;color:#3d8b5e;font-weight:normal;">J</div>
<div class="b" style="left:698.90px;top:144.00px;width:1.00px;height:12.50px;background:#c8c8c8"></div>
<div class="t" style="left:616.70px;width:200px;text-align:center;top:146.52px;font-size:8.6px;line-height:8.6px;color:#3d8b5e;font-weight:normal;">K</div>
<div class="b" style="left:733.50px;top:144.00px;width:1.00px;height:12.50px;background:#c8c8c8"></div>
<div class="t" style="left:703.30px;width:200px;text-align:center;top:146.52px;font-size:8.6px;line-height:8.6px;color:#3d8b5e;font-weight:normal;">L</div>
<div class="b" style="left:872.10px;top:144.00px;width:1.00px;height:12.50px;background:#c8c8c8"></div>
<div class="t" style="left:797.00px;width:200px;text-align:center;top:146.52px;font-size:8.6px;line-height:8.6px;color:#3d8b5e;font-weight:normal;">M</div>
<div class="b" style="left:920.90px;top:144.00px;width:1.00px;height:12.50px;background:#c8c8c8"></div>
<div class="t" style="left:843.05px;width:200px;text-align:center;top:146.52px;font-size:8.6px;line-height:8.6px;color:#3d8b5e;font-weight:normal;">N</div>
<div class="b" style="left:964.20px;top:144.00px;width:1.00px;height:12.50px;background:#c8c8c8"></div>
<div class="t" style="left:887.35px;width:200px;text-align:center;top:146.52px;font-size:8.6px;line-height:8.6px;color:#3d8b5e;font-weight:normal;">O</div>
<div class="b" style="left:1009.50px;top:144.00px;width:1.00px;height:12.50px;background:#c8c8c8"></div>
<div class="b" style="left:17.50px;top:144.00px;width:1.00px;height:12.50px;background:#c8c8c8"></div>
<div class="b" style="left:18.00px;top:155.80px;width:992.00px;height:1.40px;background:#2e7d46"></div>
<div class="b" style="left:0;top:156.5px;width:1010px;height:356.5px;overflow:hidden">
<div class="b" style="left:18.00px;top:0.50px;width:855.00px;height:12.20px;background:#fff"></div>
<div class="b" style="left:872.50px;top:12.20px;width:137.00px;height:1.00px;background:#dadada"></div>
<div class="b" style="left:872.50px;top:25.00px;width:137.00px;height:1.00px;background:#dadada"></div>
<div class="b" style="left:872.50px;top:37.80px;width:137.00px;height:1.00px;background:#dadada"></div>
<div class="b" style="left:872.50px;top:50.60px;width:137.00px;height:1.00px;background:#dadada"></div>
<div class="b" style="left:872.50px;top:63.40px;width:137.00px;height:1.00px;background:#dadada"></div>
<div class="b" style="left:872.50px;top:76.20px;width:137.00px;height:1.00px;background:#dadada"></div>
<div class="b" style="left:872.50px;top:89.00px;width:137.00px;height:1.00px;background:#dadada"></div>
<div class="b" style="left:872.50px;top:101.80px;width:137.00px;height:1.00px;background:#dadada"></div>
<div class="b" style="left:872.50px;top:114.60px;width:137.00px;height:1.00px;background:#dadada"></div>
<div class="b" style="left:872.50px;top:127.40px;width:137.00px;height:1.00px;background:#dadada"></div>
<div class="b" style="left:872.50px;top:140.20px;width:137.00px;height:1.00px;background:#dadada"></div>
<div class="b" style="left:872.50px;top:153.00px;width:137.00px;height:1.00px;background:#dadada"></div>
<div class="b" style="left:872.50px;top:165.80px;width:137.00px;height:1.00px;background:#dadada"></div>
<div class="b" style="left:872.50px;top:178.60px;width:137.00px;height:1.00px;background:#dadada"></div>
<div class="b" style="left:872.50px;top:191.40px;width:137.00px;height:1.00px;background:#dadada"></div>
<div class="b" style="left:872.50px;top:204.20px;width:137.00px;height:1.00px;background:#dadada"></div>
<div class="b" style="left:872.50px;top:217.00px;width:137.00px;height:1.00px;background:#dadada"></div>
<div class="b" style="left:872.50px;top:229.80px;width:137.00px;height:1.00px;background:#dadada"></div>
<div class="b" style="left:872.50px;top:242.60px;width:137.00px;height:1.00px;background:#dadada"></div>
<div class="b" style="left:872.50px;top:255.40px;width:137.00px;height:1.00px;background:#dadada"></div>
<div class="b" style="left:872.50px;top:281.00px;width:137.00px;height:1.00px;background:#dadada"></div>
<div class="b" style="left:872.50px;top:293.80px;width:137.00px;height:1.00px;background:#dadada"></div>
<div class="b" style="left:872.50px;top:306.60px;width:137.00px;height:1.00px;background:#dadada"></div>
<div class="b" style="left:872.50px;top:319.40px;width:137.00px;height:1.00px;background:#dadada"></div>
<div class="b" style="left:872.50px;top:332.20px;width:137.00px;height:1.00px;background:#dadada"></div>
<div class="b" style="left:872.50px;top:345.00px;width:137.00px;height:1.00px;background:#dadada"></div>
<div class="b" style="left:872.50px;top:357.80px;width:137.00px;height:1.00px;background:#dadada"></div>
<div class="b" style="left:920.90px;top:0.50px;width:1.00px;height:356.00px;background:#dadada"></div>
<div class="b" style="left:964.20px;top:0.50px;width:1.00px;height:356.00px;background:#dadada"></div>
<div class="b" style="left:1009.50px;top:0.50px;width:1.00px;height:356.00px;background:#dadada"></div>
<div class="b" style="left:18.00px;top:12.70px;width:854.50px;height:12.80px;background:#c9d6e7"></div>
<div class="b" style="left:18.00px;top:25.50px;width:854.50px;height:12.80px;background:#f5e2a8"></div>
<div class="b" style="left:18.00px;top:38.30px;width:854.50px;height:12.80px;background:#c9d6e7"></div>
<div class="b" style="left:18.00px;top:51.10px;width:854.50px;height:12.80px;background:#c0cc98"></div>
<div class="b" style="left:18.00px;top:63.90px;width:854.50px;height:12.80px;background:#c0cc98"></div>
<div class="b" style="left:18.00px;top:76.70px;width:854.50px;height:12.80px;background:#fdebd8"></div>
<div class="b" style="left:18.00px;top:89.50px;width:854.50px;height:12.80px;background:#c0cc98"></div>
<div class="b" style="left:18.00px;top:102.30px;width:854.50px;height:12.80px;background:#c0cc98"></div>
<div class="b" style="left:18.00px;top:115.10px;width:854.50px;height:12.80px;background:#ecd3dc"></div>
<div class="b" style="left:18.00px;top:127.90px;width:854.50px;height:12.80px;background:#ecd3dc"></div>
<div class="b" style="left:18.00px;top:140.70px;width:854.50px;height:12.80px;background:#c9d6e7"></div>
<div class="b" style="left:18.00px;top:153.50px;width:854.50px;height:12.80px;background:#c9d6e7"></div>
<div class="b" style="left:18.00px;top:166.30px;width:854.50px;height:12.80px;background:#c9d6e7"></div>
<div class="b" style="left:18.00px;top:179.10px;width:854.50px;height:12.80px;background:#c9d6e7"></div>
<div class="b" style="left:18.00px;top:191.90px;width:854.50px;height:12.80px;background:#c9d6e7"></div>
<div class="b" style="left:18.00px;top:204.70px;width:854.50px;height:12.80px;background:#ecd3dc"></div>
<div class="b" style="left:18.00px;top:217.50px;width:854.50px;height:12.80px;background:#c9d6e7"></div>
<div class="b" style="left:18.00px;top:230.30px;width:854.50px;height:12.80px;background:#d9d9d9"></div>
<div class="b" style="left:18.00px;top:243.10px;width:854.50px;height:12.80px;background:#f5e2a8"></div>
<div class="b" style="left:18.00px;top:255.90px;width:854.50px;height:25.60px;background:#c0cc98"></div>
<div class="b" style="left:18.00px;top:281.50px;width:854.50px;height:12.80px;background:#ecd3dc"></div>
<div class="b" style="left:18.00px;top:294.30px;width:854.50px;height:12.80px;background:#ecd3dc"></div>
<div class="b" style="left:18.00px;top:307.10px;width:854.50px;height:12.80px;background:#fcf39e"></div>
<div class="b" style="left:18.00px;top:319.90px;width:854.50px;height:12.80px;background:#f5e2a8"></div>
<div class="b" style="left:18.00px;top:332.70px;width:854.50px;height:12.80px;background:#c9d6e7"></div>
<div class="b" style="left:18.00px;top:345.50px;width:854.50px;height:12.80px;background:#d9d1e7"></div>
<div class="b" style="left:18.00px;top:12.20px;width:854.50px;height:1.00px;background:rgba(0,0,0,0.47)"></div>
<div class="b" style="left:18.00px;top:25.00px;width:854.50px;height:1.00px;background:rgba(0,0,0,0.47)"></div>
<div class="b" style="left:18.00px;top:37.80px;width:854.50px;height:1.00px;background:rgba(0,0,0,0.47)"></div>
<div class="b" style="left:18.00px;top:50.60px;width:854.50px;height:1.00px;background:rgba(0,0,0,0.47)"></div>
<div class="b" style="left:18.00px;top:63.40px;width:854.50px;height:1.00px;background:rgba(0,0,0,0.47)"></div>
<div class="b" style="left:18.00px;top:76.20px;width:854.50px;height:1.00px;background:rgba(0,0,0,0.47)"></div>
<div class="b" style="left:18.00px;top:89.00px;width:854.50px;height:1.00px;background:rgba(0,0,0,0.47)"></div>
<div class="b" style="left:18.00px;top:101.80px;width:854.50px;height:1.00px;background:rgba(0,0,0,0.47)"></div>
<div class="b" style="left:18.00px;top:114.60px;width:854.50px;height:1.00px;background:rgba(0,0,0,0.47)"></div>
<div class="b" style="left:18.00px;top:127.40px;width:854.50px;height:1.00px;background:rgba(0,0,0,0.47)"></div>
<div class="b" style="left:18.00px;top:140.20px;width:854.50px;height:1.00px;background:rgba(0,0,0,0.47)"></div>
<div class="b" style="left:18.00px;top:153.00px;width:854.50px;height:1.00px;background:rgba(0,0,0,0.47)"></div>
<div class="b" style="left:18.00px;top:165.80px;width:854.50px;height:1.00px;background:rgba(0,0,0,0.47)"></div>
<div class="b" style="left:18.00px;top:178.60px;width:854.50px;height:1.00px;background:rgba(0,0,0,0.47)"></div>
<div class="b" style="left:18.00px;top:191.40px;width:854.50px;height:1.00px;background:rgba(0,0,0,0.47)"></div>
<div class="b" style="left:18.00px;top:204.20px;width:854.50px;height:1.00px;background:rgba(0,0,0,0.47)"></div>
<div class="b" style="left:18.00px;top:217.00px;width:854.50px;height:1.00px;background:rgba(0,0,0,0.47)"></div>
<div class="b" style="left:18.00px;top:229.80px;width:854.50px;height:1.00px;background:rgba(0,0,0,0.47)"></div>
<div class="b" style="left:18.00px;top:242.60px;width:854.50px;height:1.00px;background:rgba(0,0,0,0.47)"></div>
<div class="b" style="left:18.00px;top:255.40px;width:854.50px;height:1.00px;background:rgba(0,0,0,0.47)"></div>
<div class="b" style="left:18.00px;top:281.00px;width:854.50px;height:1.00px;background:rgba(0,0,0,0.47)"></div>
<div class="b" style="left:18.00px;top:293.80px;width:854.50px;height:1.00px;background:rgba(0,0,0,0.47)"></div>
<div class="b" style="left:18.00px;top:306.60px;width:854.50px;height:1.00px;background:rgba(0,0,0,0.47)"></div>
<div class="b" style="left:18.00px;top:319.40px;width:854.50px;height:1.00px;background:rgba(0,0,0,0.47)"></div>
<div class="b" style="left:18.00px;top:332.20px;width:854.50px;height:1.00px;background:rgba(0,0,0,0.47)"></div>
<div class="b" style="left:18.00px;top:345.00px;width:854.50px;height:1.00px;background:rgba(0,0,0,0.47)"></div>
<div class="b" style="left:212.80px;top:12.70px;width:1.00px;height:343.80px;background:rgba(0,0,0,0.36)"></div>
<div class="b" style="left:255.00px;top:12.70px;width:1.00px;height:343.80px;background:rgba(0,0,0,0.36)"></div>
<div class="b" style="left:305.90px;top:12.70px;width:1.00px;height:343.80px;background:rgba(0,0,0,0.36)"></div>
<div class="b" style="left:349.80px;top:12.70px;width:1.00px;height:343.80px;background:rgba(0,0,0,0.36)"></div>
<div class="b" style="left:416.50px;top:12.70px;width:1.00px;height:343.80px;background:rgba(0,0,0,0.36)"></div>
<div class="b" style="left:469.70px;top:12.70px;width:1.00px;height:343.80px;background:rgba(0,0,0,0.36)"></div>
<div class="b" style="left:532.50px;top:12.70px;width:1.00px;height:343.80px;background:rgba(0,0,0,0.36)"></div>
<div class="b" style="left:594.20px;top:12.70px;width:1.00px;height:343.80px;background:rgba(0,0,0,0.36)"></div>
<div class="b" style="left:659.70px;top:12.70px;width:1.00px;height:343.80px;background:rgba(0,0,0,0.36)"></div>
<div class="b" style="left:698.90px;top:12.70px;width:1.00px;height:343.80px;background:rgba(0,0,0,0.36)"></div>
<div class="b" style="left:733.50px;top:12.70px;width:1.00px;height:343.80px;background:rgba(0,0,0,0.36)"></div>
<div class="b" style="left:872.10px;top:12.70px;width:1.00px;height:343.80px;background:rgba(0,0,0,0.36)"></div>
<div class="b" style="left:212.80px;top:0.50px;width:1.00px;height:12.20px;background:#d0d0d0"></div>
<div class="b" style="left:255.00px;top:0.50px;width:1.00px;height:12.20px;background:#d0d0d0"></div>
<div class="b" style="left:305.90px;top:0.50px;width:1.00px;height:12.20px;background:#d0d0d0"></div>
<div class="b" style="left:349.80px;top:0.50px;width:1.00px;height:12.20px;background:#d0d0d0"></div>
<div class="b" style="left:416.50px;top:0.50px;width:1.00px;height:12.20px;background:#d0d0d0"></div>
<div class="b" style="left:469.70px;top:0.50px;width:1.00px;height:12.20px;background:#d0d0d0"></div>
<div class="b" style="left:532.50px;top:0.50px;width:1.00px;height:12.20px;background:#d0d0d0"></div>
<div class="b" style="left:594.20px;top:0.50px;width:1.00px;height:12.20px;background:#d0d0d0"></div>
<div class="b" style="left:659.70px;top:0.50px;width:1.00px;height:12.20px;background:#d0d0d0"></div>
<div class="b" style="left:698.90px;top:0.50px;width:1.00px;height:12.20px;background:#d0d0d0"></div>
<div class="b" style="left:733.50px;top:0.50px;width:1.00px;height:12.20px;background:#d0d0d0"></div>
<div class="b" style="left:872.10px;top:0.50px;width:1.00px;height:12.20px;background:#d0d0d0"></div>
<div class="b" style="left:872.50px;top:12.20px;width:49.00px;height:1.00px;background:#dadada"></div>
<div class="b" style="left:872.50px;top:25.00px;width:49.00px;height:1.00px;background:#dadada"></div>
<div class="b" style="left:872.50px;top:37.80px;width:49.00px;height:1.00px;background:#dadada"></div>
<div class="b" style="left:872.50px;top:50.60px;width:49.00px;height:1.00px;background:#dadada"></div>
<div class="b" style="left:872.50px;top:63.40px;width:49.00px;height:1.00px;background:#dadada"></div>
<div class="b" style="left:872.50px;top:76.20px;width:49.00px;height:1.00px;background:#dadada"></div>
<div class="b" style="left:872.50px;top:89.00px;width:49.00px;height:1.00px;background:#dadada"></div>
<div class="b" style="left:872.50px;top:101.80px;width:49.00px;height:1.00px;background:#dadada"></div>
<div class="b" style="left:872.50px;top:114.60px;width:49.00px;height:1.00px;background:#dadada"></div>
<div class="b" style="left:872.50px;top:127.40px;width:49.00px;height:1.00px;background:#dadada"></div>
<div class="b" style="left:872.50px;top:140.20px;width:49.00px;height:1.00px;background:#dadada"></div>
<div class="b" style="left:872.50px;top:153.00px;width:49.00px;height:1.00px;background:#dadada"></div>
<div class="b" style="left:872.50px;top:165.80px;width:49.00px;height:1.00px;background:#dadada"></div>
<div class="b" style="left:872.50px;top:178.60px;width:49.00px;height:1.00px;background:#dadada"></div>
<div class="b" style="left:872.50px;top:191.40px;width:49.00px;height:1.00px;background:#dadada"></div>
<div class="b" style="left:872.50px;top:204.20px;width:49.00px;height:1.00px;background:#dadada"></div>
<div class="b" style="left:872.50px;top:217.00px;width:49.00px;height:1.00px;background:#dadada"></div>
<div class="b" style="left:872.50px;top:229.80px;width:49.00px;height:1.00px;background:#dadada"></div>
<div class="b" style="left:872.50px;top:242.60px;width:49.00px;height:1.00px;background:#dadada"></div>
<div class="b" style="left:872.50px;top:255.40px;width:49.00px;height:1.00px;background:#dadada"></div>
<div class="b" style="left:872.50px;top:281.00px;width:49.00px;height:1.00px;background:#dadada"></div>
<div class="b" style="left:872.50px;top:293.80px;width:49.00px;height:1.00px;background:#dadada"></div>
<div class="b" style="left:872.50px;top:306.60px;width:49.00px;height:1.00px;background:#dadada"></div>
<div class="b" style="left:872.50px;top:319.40px;width:49.00px;height:1.00px;background:#dadada"></div>
<div class="b" style="left:872.50px;top:332.20px;width:49.00px;height:1.00px;background:#dadada"></div>
<div class="b" style="left:872.50px;top:345.00px;width:49.00px;height:1.00px;background:#dadada"></div>
<div class="b" style="left:18.00px;top:12.10px;width:904.00px;height:1.20px;background:#bdbdbd"></div>
<div class="t" style="left:-90.80px;width:200px;text-align:center;top:2.27px;font-size:8.9px;line-height:8.9px;color:#666666;font-weight:normal;">1</div>
<div class="b" style="left:0.00px;top:12.20px;width:18.00px;height:1.00px;background:#dcdcdc"></div>
<div class="t" style="left:-90.80px;width:200px;text-align:center;top:15.07px;font-size:8.9px;line-height:8.9px;color:#666666;font-weight:normal;">2</div>
<div class="b" style="left:0.00px;top:25.00px;width:18.00px;height:1.00px;background:#dcdcdc"></div>
<div class="t" style="left:-90.80px;width:200px;text-align:center;top:27.87px;font-size:8.9px;line-height:8.9px;color:#666666;font-weight:normal;">3</div>
<div class="b" style="left:0.00px;top:37.80px;width:18.00px;height:1.00px;background:#dcdcdc"></div>
<div class="t" style="left:-90.80px;width:200px;text-align:center;top:40.67px;font-size:8.9px;line-height:8.9px;color:#666666;font-weight:normal;">4</div>
<div class="b" style="left:0.00px;top:50.60px;width:18.00px;height:1.00px;background:#dcdcdc"></div>
<div class="t" style="left:-90.80px;width:200px;text-align:center;top:53.47px;font-size:8.9px;line-height:8.9px;color:#666666;font-weight:normal;">5</div>
<div class="b" style="left:0.00px;top:63.40px;width:18.00px;height:1.00px;background:#dcdcdc"></div>
<div class="t" style="left:-90.80px;width:200px;text-align:center;top:66.27px;font-size:8.9px;line-height:8.9px;color:#666666;font-weight:normal;">6</div>
<div class="b" style="left:0.00px;top:76.20px;width:18.00px;height:1.00px;background:#dcdcdc"></div>
<div class="t" style="left:-90.80px;width:200px;text-align:center;top:79.07px;font-size:8.9px;line-height:8.9px;color:#666666;font-weight:normal;">7</div>
<div class="b" style="left:0.00px;top:89.00px;width:18.00px;height:1.00px;background:#dcdcdc"></div>
<div class="t" style="left:-90.80px;width:200px;text-align:center;top:91.87px;font-size:8.9px;line-height:8.9px;color:#666666;font-weight:normal;">8</div>
<div class="b" style="left:0.00px;top:101.80px;width:18.00px;height:1.00px;background:#dcdcdc"></div>
<div class="t" style="left:-90.80px;width:200px;text-align:center;top:104.67px;font-size:8.9px;line-height:8.9px;color:#666666;font-weight:normal;">9</div>
<div class="b" style="left:0.00px;top:114.60px;width:18.00px;height:1.00px;background:#dcdcdc"></div>
<div class="t" style="left:-90.80px;width:200px;text-align:center;top:117.47px;font-size:8.9px;line-height:8.9px;color:#666666;font-weight:normal;">10</div>
<div class="b" style="left:0.00px;top:127.40px;width:18.00px;height:1.00px;background:#dcdcdc"></div>
<div class="t" style="left:-90.80px;width:200px;text-align:center;top:130.27px;font-size:8.9px;line-height:8.9px;color:#666666;font-weight:normal;">11</div>
<div class="b" style="left:0.00px;top:140.20px;width:18.00px;height:1.00px;background:#dcdcdc"></div>
<div class="t" style="left:-90.80px;width:200px;text-align:center;top:143.07px;font-size:8.9px;line-height:8.9px;color:#666666;font-weight:normal;">12</div>
<div class="b" style="left:0.00px;top:153.00px;width:18.00px;height:1.00px;background:#dcdcdc"></div>
<div class="t" style="left:-90.80px;width:200px;text-align:center;top:155.87px;font-size:8.9px;line-height:8.9px;color:#666666;font-weight:normal;">13</div>
<div class="b" style="left:0.00px;top:165.80px;width:18.00px;height:1.00px;background:#dcdcdc"></div>
<div class="t" style="left:-90.80px;width:200px;text-align:center;top:168.67px;font-size:8.9px;line-height:8.9px;color:#666666;font-weight:normal;">14</div>
<div class="b" style="left:0.00px;top:178.60px;width:18.00px;height:1.00px;background:#dcdcdc"></div>
<div class="t" style="left:-90.80px;width:200px;text-align:center;top:181.47px;font-size:8.9px;line-height:8.9px;color:#666666;font-weight:normal;">15</div>
<div class="b" style="left:0.00px;top:191.40px;width:18.00px;height:1.00px;background:#dcdcdc"></div>
<div class="t" style="left:-90.80px;width:200px;text-align:center;top:194.27px;font-size:8.9px;line-height:8.9px;color:#666666;font-weight:normal;">16</div>
<div class="b" style="left:0.00px;top:204.20px;width:18.00px;height:1.00px;background:#dcdcdc"></div>
<div class="t" style="left:-90.80px;width:200px;text-align:center;top:207.07px;font-size:8.9px;line-height:8.9px;color:#666666;font-weight:normal;">17</div>
<div class="b" style="left:0.00px;top:217.00px;width:18.00px;height:1.00px;background:#dcdcdc"></div>
<div class="t" style="left:-90.80px;width:200px;text-align:center;top:219.87px;font-size:8.9px;line-height:8.9px;color:#666666;font-weight:normal;">18</div>
<div class="b" style="left:0.00px;top:229.80px;width:18.00px;height:1.00px;background:#dcdcdc"></div>
<div class="t" style="left:-90.80px;width:200px;text-align:center;top:232.67px;font-size:8.9px;line-height:8.9px;color:#666666;font-weight:normal;">19</div>
<div class="b" style="left:0.00px;top:242.60px;width:18.00px;height:1.00px;background:#dcdcdc"></div>
<div class="t" style="left:-90.80px;width:200px;text-align:center;top:245.47px;font-size:8.9px;line-height:8.9px;color:#666666;font-weight:normal;">20</div>
<div class="b" style="left:0.00px;top:255.40px;width:18.00px;height:1.00px;background:#dcdcdc"></div>
<div class="t" style="left:-90.80px;width:200px;text-align:center;top:271.07px;font-size:8.9px;line-height:8.9px;color:#666666;font-weight:normal;">21</div>
<div class="b" style="left:0.00px;top:281.00px;width:18.00px;height:1.00px;background:#dcdcdc"></div>
<div class="t" style="left:-90.80px;width:200px;text-align:center;top:283.87px;font-size:8.9px;line-height:8.9px;color:#666666;font-weight:normal;">22</div>
<div class="b" style="left:0.00px;top:293.80px;width:18.00px;height:1.00px;background:#dcdcdc"></div>
<div class="t" style="left:-90.80px;width:200px;text-align:center;top:296.67px;font-size:8.9px;line-height:8.9px;color:#666666;font-weight:normal;">23</div>
<div class="b" style="left:0.00px;top:306.60px;width:18.00px;height:1.00px;background:#dcdcdc"></div>
<div class="t" style="left:-90.80px;width:200px;text-align:center;top:309.47px;font-size:8.9px;line-height:8.9px;color:#666666;font-weight:normal;">24</div>
<div class="b" style="left:0.00px;top:319.40px;width:18.00px;height:1.00px;background:#dcdcdc"></div>
<div class="t" style="left:-90.80px;width:200px;text-align:center;top:322.27px;font-size:8.9px;line-height:8.9px;color:#666666;font-weight:normal;">25</div>
<div class="b" style="left:0.00px;top:332.20px;width:18.00px;height:1.00px;background:#dcdcdc"></div>
<div class="t" style="left:-90.80px;width:200px;text-align:center;top:335.07px;font-size:8.9px;line-height:8.9px;color:#666666;font-weight:normal;">26</div>
<div class="b" style="left:0.00px;top:345.00px;width:18.00px;height:1.00px;background:#dcdcdc"></div>
<div class="t" style="left:-90.80px;width:200px;text-align:center;top:347.87px;font-size:8.9px;line-height:8.9px;color:#666666;font-weight:normal;">27</div>
<div class="b" style="left:0.00px;top:357.80px;width:18.00px;height:1.00px;background:#dcdcdc"></div>
<div class="b" style="left:17.50px;top:0.00px;width:0.80px;height:356.50px;background:#c8c8c8"></div>
<div class="t" style="left:20.00px;top:2.60px;width:182.80px;overflow:hidden;font-size:8.5px;line-height:8.5px;color:#111;font-weight:bold;transform:scaleY(1.16);transform-origin:0 7.2px;-webkit-text-stroke:0.1px #111">Action</div>
<div class="b" style="left:202.30px;top:1.40px;width:10.50px;height:10.70px;background:linear-gradient(#fbfbfb,#ececec);border:0.5px solid #dadada;box-sizing:border-box"></div>
<svg class="b" style="left:204.80px;top:5.30px;" width="6" height="3" viewBox="0 0 6 3"><polygon points="0.8,0.3 5.2,0.3 3,2.7" fill="#6a6a6a"/></svg>
<div class="t" style="left:215.30px;top:2.60px;width:29.70px;overflow:hidden;font-size:8.5px;line-height:8.5px;color:#111;font-weight:bold;transform:scaleY(1.16);transform-origin:0 7.2px;-webkit-text-stroke:0.1px #111">TB</div>
<div class="b" style="left:244.50px;top:1.40px;width:10.50px;height:10.70px;background:linear-gradient(#fbfbfb,#ececec);border:0.5px solid #dadada;box-sizing:border-box"></div>
<svg class="b" style="left:247.00px;top:5.30px;" width="6" height="3" viewBox="0 0 6 3"><polygon points="0.8,0.3 5.2,0.3 3,2.7" fill="#6a6a6a"/></svg>
<div class="t" style="left:257.50px;top:2.60px;width:38.40px;overflow:hidden;font-size:8.5px;line-height:8.5px;color:#111;font-weight:bold;transform:scaleY(1.16);transform-origin:0 7.2px;-webkit-text-stroke:0.1px #111">Breakable</div>
<div class="b" style="left:295.40px;top:1.40px;width:10.50px;height:10.70px;background:linear-gradient(#fbfbfb,#ececec);border:0.5px solid #dadada;box-sizing:border-box"></div>
<svg class="b" style="left:297.90px;top:5.30px;" width="6" height="3" viewBox="0 0 6 3"><polygon points="0.8,0.3 5.2,0.3 3,2.7" fill="#6a6a6a"/></svg>
<div class="t" style="left:308.40px;top:2.60px;width:31.40px;overflow:hidden;font-size:8.5px;line-height:8.5px;color:#111;font-weight:bold;transform:scaleY(1.16);transform-origin:0 7.2px;-webkit-text-stroke:0.1px #111">Fuzzy?</div>
<div class="b" style="left:339.30px;top:1.40px;width:10.50px;height:10.70px;background:linear-gradient(#fbfbfb,#ececec);border:0.5px solid #dadada;box-sizing:border-box"></div>
<svg class="b" style="left:341.80px;top:5.30px;" width="6" height="3" viewBox="0 0 6 3"><polygon points="0.8,0.3 5.2,0.3 3,2.7" fill="#6a6a6a"/></svg>
<div class="t" style="left:104.60px;width:300px;text-align:right;top:2.60px;font-size:8.5px;line-height:8.5px;color:#111;font-weight:bold;transform:scaleY(1.16);transform-origin:0 7.2px;-webkit-text-stroke:0.1px #111">Project ID</div>
<div class="b" style="left:406.00px;top:1.40px;width:10.50px;height:10.70px;background:linear-gradient(#fbfbfb,#ececec);border:0.5px solid #dadada;box-sizing:border-box"></div>
<svg class="b" style="left:408.50px;top:5.30px;" width="6" height="3" viewBox="0 0 6 3"><polygon points="0.8,0.3 5.2,0.3 3,2.7" fill="#6a6a6a"/></svg>
<div class="t" style="left:419.00px;top:2.60px;width:40.70px;overflow:hidden;font-size:8.5px;line-height:8.5px;color:#111;font-weight:bold;transform:scaleY(1.16);transform-origin:0 7.2px;-webkit-text-stroke:0.1px #111">Category</div>
<div class="b" style="left:459.20px;top:1.40px;width:10.50px;height:10.70px;background:linear-gradient(#fbfbfb,#ececec);border:0.5px solid #dadada;box-sizing:border-box"></div>
<svg class="b" style="left:461.70px;top:5.30px;" width="6" height="3" viewBox="0 0 6 3"><polygon points="0.8,0.3 5.2,0.3 3,2.7" fill="#6a6a6a"/></svg>
<div class="t" style="left:472.20px;top:2.60px;width:50.30px;overflow:hidden;font-size:8.5px;line-height:8.5px;color:#111;font-weight:bold;transform:scaleY(1.16);transform-origin:0 7.2px;-webkit-text-stroke:0.1px #111">Date Created</div>
<div class="b" style="left:522.00px;top:1.40px;width:10.50px;height:10.70px;background:linear-gradient(#fbfbfb,#ececec);border:0.5px solid #dadada;box-sizing:border-box"></div>
<svg class="b" style="left:524.50px;top:5.30px;" width="6" height="3" viewBox="0 0 6 3"><polygon points="0.8,0.3 5.2,0.3 3,2.7" fill="#6a6a6a"/></svg>
<div class="t" style="left:535.00px;top:2.60px;width:49.20px;overflow:hidden;font-size:8.5px;line-height:8.5px;color:#111;font-weight:bold;transform:scaleY(1.16);transform-origin:0 7.2px;-webkit-text-stroke:0.1px #111">Due Date</div>
<div class="b" style="left:583.70px;top:1.40px;width:10.50px;height:10.70px;background:linear-gradient(#fbfbfb,#ececec);border:0.5px solid #dadada;box-sizing:border-box"></div>
<svg class="b" style="left:586.20px;top:5.30px;" width="6" height="3" viewBox="0 0 6 3"><polygon points="0.8,0.3 5.2,0.3 3,2.7" fill="#6a6a6a"/></svg>
<div class="t" style="left:596.70px;top:2.60px;width:53.00px;overflow:hidden;font-size:8.5px;line-height:8.5px;color:#111;font-weight:bold;transform:scaleY(1.16);transform-origin:0 7.2px;-webkit-text-stroke:0.1px #111">Link</div>
<div class="b" style="left:649.20px;top:1.40px;width:10.50px;height:10.70px;background:linear-gradient(#fbfbfb,#ececec);border:0.5px solid #dadada;box-sizing:border-box"></div>
<svg class="b" style="left:651.70px;top:5.30px;" width="6" height="3" viewBox="0 0 6 3"><polygon points="0.8,0.3 5.2,0.3 3,2.7" fill="#6a6a6a"/></svg>
<div class="t" style="left:387.00px;width:300px;text-align:right;top:2.60px;font-size:8.5px;line-height:8.5px;color:#111;font-weight:bold;transform:scaleY(1.16);transform-origin:0 7.2px;-webkit-text-stroke:0.1px #111">AOF</div>
<div class="b" style="left:688.40px;top:1.40px;width:10.50px;height:10.70px;background:linear-gradient(#fbfbfb,#ececec);border:0.5px solid #dadada;box-sizing:border-box"></div>
<svg class="b" style="left:690.90px;top:5.30px;" width="6" height="3" viewBox="0 0 6 3"><polygon points="0.8,0.3 5.2,0.3 3,2.7" fill="#6a6a6a"/></svg>
<div class="t" style="left:421.60px;width:300px;text-align:right;top:2.60px;font-size:8.5px;line-height:8.5px;color:#111;font-weight:bold;transform:scaleY(1.16);transform-origin:0 7.2px;-webkit-text-stroke:0.1px #111">H3</div>
<div class="b" style="left:723.00px;top:1.40px;width:10.50px;height:10.70px;background:linear-gradient(#fbfbfb,#ececec);border:0.5px solid #dadada;box-sizing:border-box"></div>
<svg class="b" style="left:725.50px;top:5.30px;" width="6" height="3" viewBox="0 0 6 3"><polygon points="0.8,0.3 5.2,0.3 3,2.7" fill="#6a6a6a"/></svg>
<div class="t" style="left:736.00px;top:2.60px;width:126.10px;overflow:hidden;font-size:8.5px;line-height:8.5px;color:#111;font-weight:bold;transform:scaleY(1.16);transform-origin:0 7.2px;-webkit-text-stroke:0.1px #111">Notes</div>
<div class="b" style="left:861.60px;top:1.40px;width:10.50px;height:10.70px;background:linear-gradient(#fbfbfb,#ececec);border:0.5px solid #dadada;box-sizing:border-box"></div>
<svg class="b" style="left:864.10px;top:5.30px;" width="6" height="3" viewBox="0 0 6 3"><polygon points="0.8,0.3 5.2,0.3 3,2.7" fill="#6a6a6a"/></svg>
<div class="t" style="left:874.60px;top:2.60px;width:36.30px;overflow:hidden;font-size:8.5px;line-height:8.5px;color:#111;font-weight:bold;transform:scaleY(1.16);transform-origin:0 7.2px;-webkit-text-stroke:0.1px #111">Context</div>
<div class="b" style="left:910.40px;top:1.40px;width:10.50px;height:10.70px;background:linear-gradient(#fbfbfb,#ececec);border:0.5px solid #dadada;box-sizing:border-box"></div>
<svg class="b" style="left:912.90px;top:5.30px;" width="6" height="3" viewBox="0 0 6 3"><polygon points="0.8,0.3 5.2,0.3 3,2.7" fill="#6a6a6a"/></svg>
<svg class="b" style="left:239.90px;top:0.70px;" width="4.6" height="4.6" viewBox="0 0 4.6 4.6"><polygon points="0,0 4.5,0 4.5,4.5" fill="#e81123"/></svg>
<svg class="b" style="left:290.80px;top:0.70px;" width="4.6" height="4.6" viewBox="0 0 4.6 4.6"><polygon points="0,0 4.5,0 4.5,4.5" fill="#e81123"/></svg>
<svg class="b" style="left:334.70px;top:0.70px;" width="4.6" height="4.6" viewBox="0 0 4.6 4.6"><polygon points="0,0 4.5,0 4.5,4.5" fill="#e81123"/></svg>
<div class="t" style="left:215.20px;top:15.59px;font-size:8.4px;line-height:8.4px;color:#202020;font-weight:normal;-webkit-text-stroke:0.12px #202020">15 mins</div>
<div class="t" style="left:258.10px;top:15.50px;font-size:8.5px;line-height:8.5px;color:#202020;font-weight:normal;-webkit-text-stroke:0.12px #202020">Y</div>
<div class="t" style="left:308.90px;top:15.50px;font-size:8.5px;line-height:8.5px;color:#202020;font-weight:normal;-webkit-text-stroke:0.12px #202020">N</div>
<div class="t" style="left:284.00px;width:200px;text-align:center;top:15.50px;font-size:8.5px;line-height:8.5px;color:#202020;font-weight:normal;-webkit-text-stroke:0.12px #202020">14</div>
<div class="t" style="left:418.90px;top:15.59px;font-size:8.4px;line-height:8.4px;color:#202020;font-weight:normal;-webkit-text-stroke:0.12px #202020">House</div>
<div class="t" style="left:230.50px;width:300px;text-align:right;top:15.32px;font-size:8.72px;line-height:8.72px;color:#202020;font-weight:normal;-webkit-text-stroke:0.12px #202020">13/04/2024</div>
<div class="t" style="left:292.20px;width:300px;text-align:right;top:15.32px;font-size:8.72px;line-height:8.72px;color:#202020;font-weight:normal;-webkit-text-stroke:0.12px #202020">24/04/2024</div>
<div class="t" style="left:397.70px;width:300px;text-align:right;top:15.50px;font-size:8.5px;line-height:8.5px;color:#202020;font-weight:normal;-webkit-text-stroke:0.12px #202020">5</div>
<div class="t" style="left:432.00px;width:300px;text-align:right;top:15.50px;font-size:8.5px;line-height:8.5px;color:#202020;font-weight:normal;-webkit-text-stroke:0.12px #202020">5</div>
<div class="t" style="left:874.60px;top:15.42px;font-size:8.6px;line-height:8.6px;color:#202020;font-weight:normal;-webkit-text-stroke:0.12px #202020">downstairs</div>
<div class="t" style="left:215.20px;top:28.39px;font-size:8.4px;line-height:8.4px;color:#202020;font-weight:normal;-webkit-text-stroke:0.12px #202020">&lt;5 mins</div>
<div class="t" style="left:258.10px;top:28.30px;font-size:8.5px;line-height:8.5px;color:#202020;font-weight:normal;-webkit-text-stroke:0.12px #202020">N</div>
<div class="t" style="left:308.90px;top:28.30px;font-size:8.5px;line-height:8.5px;color:#202020;font-weight:normal;-webkit-text-stroke:0.12px #202020">N</div>
<div class="t" style="left:284.00px;width:200px;text-align:center;top:28.30px;font-size:8.5px;line-height:8.5px;color:#202020;font-weight:normal;-webkit-text-stroke:0.12px #202020">28</div>
<div class="t" style="left:418.90px;top:28.39px;font-size:8.4px;line-height:8.4px;color:#202020;font-weight:normal;-webkit-text-stroke:0.12px #202020">Family</div>
<div class="t" style="left:230.50px;width:300px;text-align:right;top:28.12px;font-size:8.72px;line-height:8.72px;color:#202020;font-weight:normal;-webkit-text-stroke:0.12px #202020">14/04/2024</div>
<div class="t" style="left:292.20px;width:300px;text-align:right;top:28.12px;font-size:8.72px;line-height:8.72px;color:#202020;font-weight:normal;-webkit-text-stroke:0.12px #202020">25/04/2024</div>
<div class="t" style="left:397.70px;width:300px;text-align:right;top:28.30px;font-size:8.5px;line-height:8.5px;color:#202020;font-weight:normal;-webkit-text-stroke:0.12px #202020">6</div>
<div class="t" style="left:432.00px;width:300px;text-align:right;top:28.30px;font-size:8.5px;line-height:8.5px;color:#202020;font-weight:normal;-webkit-text-stroke:0.12px #202020">n/a</div>
<div class="t" style="left:874.60px;top:28.22px;font-size:8.6px;line-height:8.6px;color:#202020;font-weight:normal;-webkit-text-stroke:0.12px #202020">computer</div>
<div class="t" style="left:215.20px;top:41.19px;font-size:8.4px;line-height:8.4px;color:#202020;font-weight:normal;-webkit-text-stroke:0.12px #202020">&lt;5 mins</div>
<div class="t" style="left:258.10px;top:41.10px;font-size:8.5px;line-height:8.5px;color:#202020;font-weight:normal;-webkit-text-stroke:0.12px #202020">N</div>
<div class="t" style="left:308.90px;top:41.10px;font-size:8.5px;line-height:8.5px;color:#202020;font-weight:normal;-webkit-text-stroke:0.12px #202020">N</div>
<div class="t" style="left:284.00px;width:200px;text-align:center;top:41.10px;font-size:8.5px;line-height:8.5px;color:#202020;font-weight:normal;-webkit-text-stroke:0.12px #202020">14</div>
<div class="t" style="left:418.90px;top:41.19px;font-size:8.4px;line-height:8.4px;color:#202020;font-weight:normal;-webkit-text-stroke:0.12px #202020">House</div>
<div class="t" style="left:230.50px;width:300px;text-align:right;top:40.92px;font-size:8.72px;line-height:8.72px;color:#202020;font-weight:normal;-webkit-text-stroke:0.12px #202020">19/04/2024</div>
<div class="t" style="left:292.20px;width:300px;text-align:right;top:40.92px;font-size:8.72px;line-height:8.72px;color:#202020;font-weight:normal;-webkit-text-stroke:0.12px #202020">25/04/2024</div>
<div class="t" style="left:397.70px;width:300px;text-align:right;top:41.10px;font-size:8.5px;line-height:8.5px;color:#202020;font-weight:normal;-webkit-text-stroke:0.12px #202020">5</div>
<div class="t" style="left:432.00px;width:300px;text-align:right;top:41.10px;font-size:8.5px;line-height:8.5px;color:#202020;font-weight:normal;-webkit-text-stroke:0.12px #202020">5</div>
<div class="t" style="left:874.60px;top:41.02px;font-size:8.6px;line-height:8.6px;color:#202020;font-weight:normal;-webkit-text-stroke:0.12px #202020">downstairs</div>
<div class="t" style="left:20.00px;top:53.90px;font-size:8.5px;line-height:8.5px;color:#202020;font-weight:normal;-webkit-text-stroke:0.12px #202020">Plant out geraniums - decide on location</div>
<div class="t" style="left:215.20px;top:53.99px;font-size:8.4px;line-height:8.4px;color:#202020;font-weight:normal;-webkit-text-stroke:0.12px #202020">60mins+</div>
<div class="t" style="left:258.10px;top:53.90px;font-size:8.5px;line-height:8.5px;color:#202020;font-weight:normal;-webkit-text-stroke:0.12px #202020">Y</div>
<div class="t" style="left:308.90px;top:53.90px;font-size:8.5px;line-height:8.5px;color:#202020;font-weight:normal;-webkit-text-stroke:0.12px #202020">N</div>
<div class="t" style="left:284.00px;width:200px;text-align:center;top:53.90px;font-size:8.5px;line-height:8.5px;color:#202020;font-weight:normal;-webkit-text-stroke:0.12px #202020">22d</div>
<div class="t" style="left:418.90px;top:53.99px;font-size:8.4px;line-height:8.4px;color:#202020;font-weight:normal;-webkit-text-stroke:0.12px #202020">Garden</div>
<div class="t" style="left:230.50px;width:300px;text-align:right;top:53.72px;font-size:8.72px;line-height:8.72px;color:#202020;font-weight:normal;-webkit-text-stroke:0.12px #202020">04/04/2024</div>
<div class="t" style="left:292.20px;width:300px;text-align:right;top:53.72px;font-size:8.72px;line-height:8.72px;color:#202020;font-weight:normal;-webkit-text-stroke:0.12px #202020">28/04/2024</div>
<div class="t" style="left:527.50px;width:200px;text-align:center;top:53.90px;font-size:8.5px;line-height:8.5px;color:#8a63b8;font-weight:normal;text-decoration:underline">Link</div>
<div class="t" style="left:397.70px;width:300px;text-align:right;top:53.90px;font-size:8.5px;line-height:8.5px;color:#202020;font-weight:normal;-webkit-text-stroke:0.12px #202020">4</div>
<div class="t" style="left:432.00px;width:300px;text-align:right;top:53.90px;font-size:8.5px;line-height:8.5px;color:#202020;font-weight:normal;-webkit-text-stroke:0.12px #202020">4</div>
<div class="t" style="left:874.60px;top:53.82px;font-size:8.6px;line-height:8.6px;color:#202020;font-weight:normal;-webkit-text-stroke:0.12px #202020">Outside</div>
<div class="t" style="left:20.00px;top:66.70px;font-size:8.5px;line-height:8.5px;color:#202020;font-weight:normal;-webkit-text-stroke:0.12px #202020">plant out new plants</div>
<div class="t" style="left:215.20px;top:66.79px;font-size:8.4px;line-height:8.4px;color:#202020;font-weight:normal;-webkit-text-stroke:0.12px #202020">30 mins</div>
<div class="t" style="left:258.10px;top:66.70px;font-size:8.5px;line-height:8.5px;color:#202020;font-weight:normal;-webkit-text-stroke:0.12px #202020">Y</div>
<div class="t" style="left:308.90px;top:66.70px;font-size:8.5px;line-height:8.5px;color:#202020;font-weight:normal;-webkit-text-stroke:0.12px #202020">Y</div>
<div class="t" style="left:284.00px;width:200px;text-align:center;top:66.70px;font-size:8.5px;line-height:8.5px;color:#202020;font-weight:normal;-webkit-text-stroke:0.12px #202020">22d</div>
<div class="t" style="left:418.90px;top:66.79px;font-size:8.4px;line-height:8.4px;color:#202020;font-weight:normal;-webkit-text-stroke:0.12px #202020">Garden</div>
<div class="t" style="left:230.50px;width:300px;text-align:right;top:66.52px;font-size:8.72px;line-height:8.72px;color:#202020;font-weight:normal;-webkit-text-stroke:0.12px #202020">14/04/2024</div>
<div class="t" style="left:292.20px;width:300px;text-align:right;top:66.52px;font-size:8.72px;line-height:8.72px;color:#202020;font-weight:normal;-webkit-text-stroke:0.12px #202020">28/04/2024</div>
<div class="t" style="left:397.70px;width:300px;text-align:right;top:66.70px;font-size:8.5px;line-height:8.5px;color:#202020;font-weight:normal;-webkit-text-stroke:0.12px #202020">4</div>
<div class="t" style="left:432.00px;width:300px;text-align:right;top:66.70px;font-size:8.5px;line-height:8.5px;color:#202020;font-weight:normal;-webkit-text-stroke:0.12px #202020">4</div>
<div class="t" style="left:874.60px;top:66.62px;font-size:8.6px;line-height:8.6px;color:#202020;font-weight:normal;-webkit-text-stroke:0.12px #202020">Outside</div>
<div class="t" style="left:20.00px;top:79.50px;font-size:8.5px;line-height:8.5px;color:#202020;font-weight:normal;-webkit-text-stroke:0.12px #202020">book a haircut</div>
<div class="t" style="left:215.20px;top:79.59px;font-size:8.4px;line-height:8.4px;color:#202020;font-weight:normal;-webkit-text-stroke:0.12px #202020">&lt;5 mins</div>
<div class="t" style="left:258.10px;top:79.50px;font-size:8.5px;line-height:8.5px;color:#202020;font-weight:normal;-webkit-text-stroke:0.12px #202020">N</div>
<div class="t" style="left:308.90px;top:79.50px;font-size:8.5px;line-height:8.5px;color:#202020;font-weight:normal;-webkit-text-stroke:0.12px #202020">N</div>
<div class="t" style="left:284.00px;width:200px;text-align:center;top:79.50px;font-size:8.5px;line-height:8.5px;color:#8a8a8a;font-weight:normal;">-</div>
<div class="t" style="left:418.90px;top:79.59px;font-size:8.4px;line-height:8.4px;color:#202020;font-weight:normal;-webkit-text-stroke:0.12px #202020">Self Dev</div>
<div class="t" style="left:230.50px;width:300px;text-align:right;top:79.32px;font-size:8.72px;line-height:8.72px;color:#202020;font-weight:normal;-webkit-text-stroke:0.12px #202020">14/04/2024</div>
<div class="t" style="left:292.20px;width:300px;text-align:right;top:79.32px;font-size:8.72px;line-height:8.72px;color:#202020;font-weight:normal;-webkit-text-stroke:0.12px #202020">28/04/2024</div>
<div class="t" style="left:397.70px;width:300px;text-align:right;top:79.50px;font-size:8.5px;line-height:8.5px;color:#202020;font-weight:normal;-webkit-text-stroke:0.12px #202020">2</div>
<div class="t" style="left:432.00px;width:300px;text-align:right;top:79.50px;font-size:8.5px;line-height:8.5px;color:#202020;font-weight:normal;-webkit-text-stroke:0.12px #202020">n/a</div>
<div class="t" style="left:874.60px;top:79.42px;font-size:8.6px;line-height:8.6px;color:#202020;font-weight:normal;-webkit-text-stroke:0.12px #202020">computer</div>
<div class="t" style="left:20.00px;top:92.30px;font-size:8.5px;line-height:8.5px;color:#202020;font-weight:normal;-webkit-text-stroke:0.12px #202020">Plant out bergenias in front border</div>
<div class="t" style="left:215.20px;top:92.39px;font-size:8.4px;line-height:8.4px;color:#202020;font-weight:normal;-webkit-text-stroke:0.12px #202020">30 mins</div>
<div class="t" style="left:258.10px;top:92.30px;font-size:8.5px;line-height:8.5px;color:#202020;font-weight:normal;-webkit-text-stroke:0.12px #202020">Y</div>
<div class="t" style="left:308.90px;top:92.30px;font-size:8.5px;line-height:8.5px;color:#202020;font-weight:normal;-webkit-text-stroke:0.12px #202020">N</div>
<div class="t" style="left:284.00px;width:200px;text-align:center;top:92.30px;font-size:8.5px;line-height:8.5px;color:#202020;font-weight:normal;-webkit-text-stroke:0.12px #202020">22d</div>
<div class="t" style="left:418.90px;top:92.39px;font-size:8.4px;line-height:8.4px;color:#202020;font-weight:normal;-webkit-text-stroke:0.12px #202020">Garden</div>
<div class="t" style="left:230.50px;width:300px;text-align:right;top:92.12px;font-size:8.72px;line-height:8.72px;color:#202020;font-weight:normal;-webkit-text-stroke:0.12px #202020">04/04/2024</div>
<div class="t" style="left:292.20px;width:300px;text-align:right;top:92.12px;font-size:8.72px;line-height:8.72px;color:#202020;font-weight:normal;-webkit-text-stroke:0.12px #202020">30/04/2024</div>
<div class="t" style="left:527.50px;width:200px;text-align:center;top:92.30px;font-size:8.5px;line-height:8.5px;color:#8a63b8;font-weight:normal;text-decoration:underline">Link</div>
<div class="t" style="left:397.70px;width:300px;text-align:right;top:92.30px;font-size:8.5px;line-height:8.5px;color:#202020;font-weight:normal;-webkit-text-stroke:0.12px #202020">4</div>
<div class="t" style="left:432.00px;width:300px;text-align:right;top:92.30px;font-size:8.5px;line-height:8.5px;color:#202020;font-weight:normal;-webkit-text-stroke:0.12px #202020">4</div>
<div class="t" style="left:874.60px;top:92.22px;font-size:8.6px;line-height:8.6px;color:#202020;font-weight:normal;-webkit-text-stroke:0.12px #202020">Outside</div>
<div class="t" style="left:20.00px;top:105.10px;font-size:8.5px;line-height:8.5px;color:#202020;font-weight:normal;-webkit-text-stroke:0.12px #202020">finish weeding side border</div>
<div class="t" style="left:215.20px;top:105.19px;font-size:8.4px;line-height:8.4px;color:#202020;font-weight:normal;-webkit-text-stroke:0.12px #202020">60mins+</div>
<div class="t" style="left:258.10px;top:105.10px;font-size:8.5px;line-height:8.5px;color:#202020;font-weight:normal;-webkit-text-stroke:0.12px #202020">Y</div>
<div class="t" style="left:308.90px;top:105.10px;font-size:8.5px;line-height:8.5px;color:#202020;font-weight:normal;-webkit-text-stroke:0.12px #202020">N</div>
<div class="t" style="left:284.00px;width:200px;text-align:center;top:105.10px;font-size:8.5px;line-height:8.5px;color:#202020;font-weight:normal;-webkit-text-stroke:0.12px #202020">22b</div>
<div class="t" style="left:418.90px;top:105.19px;font-size:8.4px;line-height:8.4px;color:#202020;font-weight:normal;-webkit-text-stroke:0.12px #202020">Garden</div>
<div class="t" style="left:230.50px;width:300px;text-align:right;top:104.92px;font-size:8.72px;line-height:8.72px;color:#202020;font-weight:normal;-webkit-text-stroke:0.12px #202020">04/04/2024</div>
<div class="t" style="left:292.20px;width:300px;text-align:right;top:104.92px;font-size:8.72px;line-height:8.72px;color:#202020;font-weight:normal;-webkit-text-stroke:0.12px #202020">30/04/2024</div>
<div class="t" style="left:527.50px;width:200px;text-align:center;top:105.10px;font-size:8.5px;line-height:8.5px;color:#8a63b8;font-weight:normal;text-decoration:underline">Link</div>
<div class="t" style="left:397.70px;width:300px;text-align:right;top:105.10px;font-size:8.5px;line-height:8.5px;color:#202020;font-weight:normal;-webkit-text-stroke:0.12px #202020">4</div>
<div class="t" style="left:432.00px;width:300px;text-align:right;top:105.10px;font-size:8.5px;line-height:8.5px;color:#202020;font-weight:normal;-webkit-text-stroke:0.12px #202020">4</div>
<div class="t" style="left:874.60px;top:105.02px;font-size:8.6px;line-height:8.6px;color:#202020;font-weight:normal;-webkit-text-stroke:0.12px #202020">Outside</div>
<div class="t" style="left:20.00px;top:117.90px;font-size:8.5px;line-height:8.5px;color:#202020;font-weight:normal;-webkit-text-stroke:0.12px #202020">Postage Stamp quilt - review progress</div>
<div class="t" style="left:215.20px;top:117.99px;font-size:8.4px;line-height:8.4px;color:#202020;font-weight:normal;-webkit-text-stroke:0.12px #202020">15 mins</div>
<div class="t" style="left:258.10px;top:117.90px;font-size:8.5px;line-height:8.5px;color:#202020;font-weight:normal;-webkit-text-stroke:0.12px #202020">N</div>
<div class="t" style="left:308.90px;top:117.90px;font-size:8.5px;line-height:8.5px;color:#202020;font-weight:normal;-webkit-text-stroke:0.12px #202020">Y</div>
<div class="t" style="left:284.00px;width:200px;text-align:center;top:117.90px;font-size:8.5px;line-height:8.5px;color:#202020;font-weight:normal;-webkit-text-stroke:0.12px #202020">2</div>
<div class="t" style="left:418.90px;top:117.99px;font-size:8.4px;line-height:8.4px;color:#202020;font-weight:normal;-webkit-text-stroke:0.12px #202020">Craft</div>
<div class="t" style="left:230.50px;width:300px;text-align:right;top:117.72px;font-size:8.72px;line-height:8.72px;color:#202020;font-weight:normal;-webkit-text-stroke:0.12px #202020">04/04/2024</div>
<div class="t" style="left:292.20px;width:300px;text-align:right;top:117.72px;font-size:8.72px;line-height:8.72px;color:#202020;font-weight:normal;-webkit-text-stroke:0.12px #202020">30/04/2024</div>
<div class="t" style="left:527.50px;width:200px;text-align:center;top:117.90px;font-size:8.5px;line-height:8.5px;color:#8a63b8;font-weight:normal;text-decoration:underline">Link</div>
<div class="t" style="left:397.70px;width:300px;text-align:right;top:117.90px;font-size:8.5px;line-height:8.5px;color:#202020;font-weight:normal;-webkit-text-stroke:0.12px #202020">3</div>
<div class="t" style="left:432.00px;width:300px;text-align:right;top:117.90px;font-size:8.5px;line-height:8.5px;color:#202020;font-weight:normal;-webkit-text-stroke:0.12px #202020">3</div>
<div class="t" style="left:874.60px;top:117.82px;font-size:8.6px;line-height:8.6px;color:#202020;font-weight:normal;-webkit-text-stroke:0.12px #202020">sewing</div>
<div class="t" style="left:215.20px;top:130.79px;font-size:8.4px;line-height:8.4px;color:#202020;font-weight:normal;-webkit-text-stroke:0.12px #202020">15 mins</div>
<div class="t" style="left:258.10px;top:130.70px;font-size:8.5px;line-height:8.5px;color:#202020;font-weight:normal;-webkit-text-stroke:0.12px #202020">N</div>
<div class="t" style="left:308.90px;top:130.70px;font-size:8.5px;line-height:8.5px;color:#202020;font-weight:normal;-webkit-text-stroke:0.12px #202020">Y</div>
<div class="t" style="left:284.00px;width:200px;text-align:center;top:130.70px;font-size:8.5px;line-height:8.5px;color:#202020;font-weight:normal;-webkit-text-stroke:0.12px #202020">4</div>
<div class="t" style="left:418.90px;top:130.79px;font-size:8.4px;line-height:8.4px;color:#202020;font-weight:normal;-webkit-text-stroke:0.12px #202020">Craft</div>
<div class="t" style="left:230.50px;width:300px;text-align:right;top:130.52px;font-size:8.72px;line-height:8.72px;color:#202020;font-weight:normal;-webkit-text-stroke:0.12px #202020">04/04/2024</div>
<div class="t" style="left:292.20px;width:300px;text-align:right;top:130.52px;font-size:8.72px;line-height:8.72px;color:#202020;font-weight:normal;-webkit-text-stroke:0.12px #202020">30/04/2024</div>
<div class="t" style="left:527.50px;width:200px;text-align:center;top:130.70px;font-size:8.5px;line-height:8.5px;color:#8a63b8;font-weight:normal;text-decoration:underline">Link</div>
<div class="t" style="left:397.70px;width:300px;text-align:right;top:130.70px;font-size:8.5px;line-height:8.5px;color:#202020;font-weight:normal;-webkit-text-stroke:0.12px #202020">3</div>
<div class="t" style="left:432.00px;width:300px;text-align:right;top:130.70px;font-size:8.5px;line-height:8.5px;color:#202020;font-weight:normal;-webkit-text-stroke:0.12px #202020">3</div>
<div class="t" style="left:874.60px;top:130.62px;font-size:8.6px;line-height:8.6px;color:#202020;font-weight:normal;-webkit-text-stroke:0.12px #202020">knitting</div>
<div class="t" style="left:215.20px;top:143.59px;font-size:8.4px;line-height:8.4px;color:#202020;font-weight:normal;-webkit-text-stroke:0.12px #202020">&lt;5 mins</div>
<div class="t" style="left:258.10px;top:143.50px;font-size:8.5px;line-height:8.5px;color:#202020;font-weight:normal;-webkit-text-stroke:0.12px #202020">N</div>
<div class="t" style="left:308.90px;top:143.50px;font-size:8.5px;line-height:8.5px;color:#202020;font-weight:normal;-webkit-text-stroke:0.12px #202020">N</div>
<div class="t" style="left:284.00px;width:200px;text-align:center;top:143.50px;font-size:8.5px;line-height:8.5px;color:#202020;font-weight:normal;-webkit-text-stroke:0.12px #202020">14</div>
<div class="t" style="left:418.90px;top:143.59px;font-size:8.4px;line-height:8.4px;color:#202020;font-weight:normal;-webkit-text-stroke:0.12px #202020">House</div>
<div class="t" style="left:230.50px;width:300px;text-align:right;top:143.32px;font-size:8.72px;line-height:8.72px;color:#202020;font-weight:normal;-webkit-text-stroke:0.12px #202020">04/04/2024</div>
<div class="t" style="left:292.20px;width:300px;text-align:right;top:143.32px;font-size:8.72px;line-height:8.72px;color:#202020;font-weight:normal;-webkit-text-stroke:0.12px #202020">30/04/2024</div>
<div class="t" style="left:527.50px;width:200px;text-align:center;top:143.50px;font-size:8.5px;line-height:8.5px;color:#8a63b8;font-weight:normal;text-decoration:underline">Link</div>
<div class="t" style="left:397.70px;width:300px;text-align:right;top:143.50px;font-size:8.5px;line-height:8.5px;color:#202020;font-weight:normal;-webkit-text-stroke:0.12px #202020">5</div>
<div class="t" style="left:432.00px;width:300px;text-align:right;top:143.50px;font-size:8.5px;line-height:8.5px;color:#202020;font-weight:normal;-webkit-text-stroke:0.12px #202020">5</div>
<div class="t" style="left:874.60px;top:143.42px;font-size:8.6px;line-height:8.6px;color:#202020;font-weight:normal;-webkit-text-stroke:0.12px #202020">upstairs</div>
<div class="t" style="left:20.00px;top:156.30px;font-size:8.5px;line-height:8.5px;color:#202020;font-weight:normal;-webkit-text-stroke:0.12px #202020">De-bobble sweaters</div>
<div class="t" style="left:215.20px;top:156.39px;font-size:8.4px;line-height:8.4px;color:#202020;font-weight:normal;-webkit-text-stroke:0.12px #202020">30 mins</div>
<div class="t" style="left:258.10px;top:156.30px;font-size:8.5px;line-height:8.5px;color:#202020;font-weight:normal;-webkit-text-stroke:0.12px #202020">Y</div>
<div class="t" style="left:308.90px;top:156.30px;font-size:8.5px;line-height:8.5px;color:#202020;font-weight:normal;-webkit-text-stroke:0.12px #202020">N</div>
<div class="t" style="left:284.00px;width:200px;text-align:center;top:156.30px;font-size:8.5px;line-height:8.5px;color:#8a8a8a;font-weight:normal;">-</div>
<div class="t" style="left:418.90px;top:156.39px;font-size:8.4px;line-height:8.4px;color:#202020;font-weight:normal;-webkit-text-stroke:0.12px #202020">House</div>
<div class="t" style="left:230.50px;width:300px;text-align:right;top:156.12px;font-size:8.72px;line-height:8.72px;color:#202020;font-weight:normal;-webkit-text-stroke:0.12px #202020">04/04/2024</div>
<div class="t" style="left:292.20px;width:300px;text-align:right;top:156.12px;font-size:8.72px;line-height:8.72px;color:#202020;font-weight:normal;-webkit-text-stroke:0.12px #202020">30/04/2024</div>
<div class="t" style="left:397.70px;width:300px;text-align:right;top:156.30px;font-size:8.5px;line-height:8.5px;color:#202020;font-weight:normal;-webkit-text-stroke:0.12px #202020">5</div>
<div class="t" style="left:432.00px;width:300px;text-align:right;top:156.30px;font-size:8.5px;line-height:8.5px;color:#202020;font-weight:normal;-webkit-text-stroke:0.12px #202020">n/a</div>
<div class="t" style="left:874.60px;top:156.22px;font-size:8.6px;line-height:8.6px;color:#202020;font-weight:normal;-webkit-text-stroke:0.12px #202020">upstairs</div>
<div class="t" style="left:215.20px;top:169.19px;font-size:8.4px;line-height:8.4px;color:#202020;font-weight:normal;-webkit-text-stroke:0.12px #202020">15 mins</div>
<div class="t" style="left:258.10px;top:169.10px;font-size:8.5px;line-height:8.5px;color:#202020;font-weight:normal;-webkit-text-stroke:0.12px #202020">N</div>
<div class="t" style="left:308.90px;top:169.10px;font-size:8.5px;line-height:8.5px;color:#202020;font-weight:normal;-webkit-text-stroke:0.12px #202020">N</div>
<div class="t" style="left:284.00px;width:200px;text-align:center;top:169.10px;font-size:8.5px;line-height:8.5px;color:#8a8a8a;font-weight:normal;">-</div>
<div class="t" style="left:418.90px;top:169.19px;font-size:8.4px;line-height:8.4px;color:#202020;font-weight:normal;-webkit-text-stroke:0.12px #202020">House</div>
<div class="t" style="left:230.50px;width:300px;text-align:right;top:168.92px;font-size:8.72px;line-height:8.72px;color:#202020;font-weight:normal;-webkit-text-stroke:0.12px #202020">04/04/2024</div>
<div class="t" style="left:292.20px;width:300px;text-align:right;top:168.92px;font-size:8.72px;line-height:8.72px;color:#202020;font-weight:normal;-webkit-text-stroke:0.12px #202020">30/04/2024</div>
<div class="t" style="left:397.70px;width:300px;text-align:right;top:169.10px;font-size:8.5px;line-height:8.5px;color:#202020;font-weight:normal;-webkit-text-stroke:0.12px #202020">5</div>
<div class="t" style="left:432.00px;width:300px;text-align:right;top:169.10px;font-size:8.5px;line-height:8.5px;color:#202020;font-weight:normal;-webkit-text-stroke:0.12px #202020">5</div>
<div class="t" style="left:874.60px;top:169.02px;font-size:8.6px;line-height:8.6px;color:#202020;font-weight:normal;-webkit-text-stroke:0.12px #202020">downstairs</div>
<div class="t" style="left:20.00px;top:181.90px;font-size:8.5px;line-height:8.5px;color:#202020;font-weight:normal;-webkit-text-stroke:0.12px #202020">oil chopping boards</div>
<div class="t" style="left:215.20px;top:181.99px;font-size:8.4px;line-height:8.4px;color:#202020;font-weight:normal;-webkit-text-stroke:0.12px #202020">15 mins</div>
<div class="t" style="left:258.10px;top:181.90px;font-size:8.5px;line-height:8.5px;color:#202020;font-weight:normal;-webkit-text-stroke:0.12px #202020">N</div>
<div class="t" style="left:308.90px;top:181.90px;font-size:8.5px;line-height:8.5px;color:#202020;font-weight:normal;-webkit-text-stroke:0.12px #202020">N</div>
<div class="t" style="left:284.00px;width:200px;text-align:center;top:181.90px;font-size:8.5px;line-height:8.5px;color:#8a8a8a;font-weight:normal;">-</div>
<div class="t" style="left:418.90px;top:181.99px;font-size:8.4px;line-height:8.4px;color:#202020;font-weight:normal;-webkit-text-stroke:0.12px #202020">House</div>
<div class="t" style="left:230.50px;width:300px;text-align:right;top:181.72px;font-size:8.72px;line-height:8.72px;color:#202020;font-weight:normal;-webkit-text-stroke:0.12px #202020">04/04/2024</div>
<div class="t" style="left:292.20px;width:300px;text-align:right;top:181.72px;font-size:8.72px;line-height:8.72px;color:#202020;font-weight:normal;-webkit-text-stroke:0.12px #202020">30/04/2024</div>
<div class="t" style="left:397.70px;width:300px;text-align:right;top:181.90px;font-size:8.5px;line-height:8.5px;color:#202020;font-weight:normal;-webkit-text-stroke:0.12px #202020">5</div>
<div class="t" style="left:432.00px;width:300px;text-align:right;top:181.90px;font-size:8.5px;line-height:8.5px;color:#202020;font-weight:normal;-webkit-text-stroke:0.12px #202020">n/a</div>
<div class="t" style="left:874.60px;top:181.82px;font-size:8.6px;line-height:8.6px;color:#202020;font-weight:normal;-webkit-text-stroke:0.12px #202020">downstairs</div>
<div class="t" style="left:215.20px;top:194.79px;font-size:8.4px;line-height:8.4px;color:#202020;font-weight:normal;-webkit-text-stroke:0.12px #202020">15 mins</div>
<div class="t" style="left:258.10px;top:194.70px;font-size:8.5px;line-height:8.5px;color:#202020;font-weight:normal;-webkit-text-stroke:0.12px #202020">Y</div>
<div class="t" style="left:308.90px;top:194.70px;font-size:8.5px;line-height:8.5px;color:#202020;font-weight:normal;-webkit-text-stroke:0.12px #202020">N</div>
<div class="t" style="left:284.00px;width:200px;text-align:center;top:194.70px;font-size:8.5px;line-height:8.5px;color:#8a8a8a;font-weight:normal;">-</div>
<div class="t" style="left:418.90px;top:194.79px;font-size:8.4px;line-height:8.4px;color:#202020;font-weight:normal;-webkit-text-stroke:0.12px #202020">House</div>
<div class="t" style="left:230.50px;width:300px;text-align:right;top:194.52px;font-size:8.72px;line-height:8.72px;color:#202020;font-weight:normal;-webkit-text-stroke:0.12px #202020">04/04/2024</div>
<div class="t" style="left:292.20px;width:300px;text-align:right;top:194.52px;font-size:8.72px;line-height:8.72px;color:#202020;font-weight:normal;-webkit-text-stroke:0.12px #202020">30/04/2024</div>
<div class="t" style="left:397.70px;width:300px;text-align:right;top:194.70px;font-size:8.5px;line-height:8.5px;color:#202020;font-weight:normal;-webkit-text-stroke:0.12px #202020">5</div>
<div class="t" style="left:432.00px;width:300px;text-align:right;top:194.70px;font-size:8.5px;line-height:8.5px;color:#202020;font-weight:normal;-webkit-text-stroke:0.12px #202020">5</div>
<div class="t" style="left:874.60px;top:194.62px;font-size:8.6px;line-height:8.6px;color:#202020;font-weight:normal;-webkit-text-stroke:0.12px #202020">downstairs</div>
<div class="t" style="left:215.20px;top:207.59px;font-size:8.4px;line-height:8.4px;color:#202020;font-weight:normal;-webkit-text-stroke:0.12px #202020">60mins+</div>
<div class="t" style="left:258.10px;top:207.50px;font-size:8.5px;line-height:8.5px;color:#202020;font-weight:normal;-webkit-text-stroke:0.12px #202020">N</div>
<div class="t" style="left:308.90px;top:207.50px;font-size:8.5px;line-height:8.5px;color:#202020;font-weight:normal;-webkit-text-stroke:0.12px #202020">Y</div>
<div class="t" style="left:284.00px;width:200px;text-align:center;top:207.50px;font-size:8.5px;line-height:8.5px;color:#202020;font-weight:normal;-webkit-text-stroke:0.12px #202020">27</div>
<div class="t" style="left:418.90px;top:207.59px;font-size:8.4px;line-height:8.4px;color:#202020;font-weight:normal;-webkit-text-stroke:0.12px #202020">Craft</div>
<div class="t" style="left:230.50px;width:300px;text-align:right;top:207.32px;font-size:8.72px;line-height:8.72px;color:#202020;font-weight:normal;-webkit-text-stroke:0.12px #202020">05/04/2024</div>
<div class="t" style="left:292.20px;width:300px;text-align:right;top:207.32px;font-size:8.72px;line-height:8.72px;color:#202020;font-weight:normal;-webkit-text-stroke:0.12px #202020">30/04/2024</div>
<div class="t" style="left:397.70px;width:300px;text-align:right;top:207.50px;font-size:8.5px;line-height:8.5px;color:#202020;font-weight:normal;-webkit-text-stroke:0.12px #202020">3</div>
<div class="t" style="left:432.00px;width:300px;text-align:right;top:207.50px;font-size:8.5px;line-height:8.5px;color:#202020;font-weight:normal;-webkit-text-stroke:0.12px #202020">n/a</div>
<div class="t" style="left:874.60px;top:207.42px;font-size:8.6px;line-height:8.6px;color:#202020;font-weight:normal;-webkit-text-stroke:0.12px #202020">sewing</div>
<div class="t" style="left:215.20px;top:220.39px;font-size:8.4px;line-height:8.4px;color:#202020;font-weight:normal;-webkit-text-stroke:0.12px #202020">15 mins</div>
<div class="t" style="left:258.10px;top:220.30px;font-size:8.5px;line-height:8.5px;color:#202020;font-weight:normal;-webkit-text-stroke:0.12px #202020">Y</div>
<div class="t" style="left:308.90px;top:220.30px;font-size:8.5px;line-height:8.5px;color:#202020;font-weight:normal;-webkit-text-stroke:0.12px #202020">N</div>
<div class="t" style="left:284.00px;width:200px;text-align:center;top:220.30px;font-size:8.5px;line-height:8.5px;color:#202020;font-weight:normal;-webkit-text-stroke:0.12px #202020">14</div>
<div class="t" style="left:418.90px;top:220.39px;font-size:8.4px;line-height:8.4px;color:#202020;font-weight:normal;-webkit-text-stroke:0.12px #202020">House</div>
<div class="t" style="left:230.50px;width:300px;text-align:right;top:220.12px;font-size:8.72px;line-height:8.72px;color:#202020;font-weight:normal;-webkit-text-stroke:0.12px #202020">08/04/2024</div>
<div class="t" style="left:292.20px;width:300px;text-align:right;top:220.12px;font-size:8.72px;line-height:8.72px;color:#202020;font-weight:normal;-webkit-text-stroke:0.12px #202020">30/04/2024</div>
<div class="t" style="left:397.70px;width:300px;text-align:right;top:220.30px;font-size:8.5px;line-height:8.5px;color:#202020;font-weight:normal;-webkit-text-stroke:0.12px #202020">5</div>
<div class="t" style="left:432.00px;width:300px;text-align:right;top:220.30px;font-size:8.5px;line-height:8.5px;color:#202020;font-weight:normal;-webkit-text-stroke:0.12px #202020">5</div>
<div class="t" style="left:874.60px;top:220.22px;font-size:8.6px;line-height:8.6px;color:#202020;font-weight:normal;-webkit-text-stroke:0.12px #202020">downstairs</div>
<div class="t" style="left:215.20px;top:233.19px;font-size:8.4px;line-height:8.4px;color:#202020;font-weight:normal;-webkit-text-stroke:0.12px #202020">60mins+</div>
<div class="t" style="left:258.10px;top:233.10px;font-size:8.5px;line-height:8.5px;color:#202020;font-weight:normal;-webkit-text-stroke:0.12px #202020">Y</div>
<div class="t" style="left:308.90px;top:233.10px;font-size:8.5px;line-height:8.5px;color:#202020;font-weight:normal;-webkit-text-stroke:0.12px #202020">Y</div>
<div class="t" style="left:284.00px;width:200px;text-align:center;top:233.10px;font-size:8.5px;line-height:8.5px;color:#8a8a8a;font-weight:normal;">-</div>
<div class="t" style="left:418.90px;top:233.19px;font-size:8.4px;line-height:8.4px;color:#202020;font-weight:normal;-webkit-text-stroke:0.12px #202020">Finance</div>
<div class="t" style="left:230.50px;width:300px;text-align:right;top:232.92px;font-size:8.72px;line-height:8.72px;color:#202020;font-weight:normal;-webkit-text-stroke:0.12px #202020">08/04/2024</div>
<div class="t" style="left:292.20px;width:300px;text-align:right;top:232.92px;font-size:8.72px;line-height:8.72px;color:#202020;font-weight:normal;-webkit-text-stroke:0.12px #202020">30/04/2024</div>
<div class="t" style="left:397.70px;width:300px;text-align:right;top:233.10px;font-size:8.5px;line-height:8.5px;color:#202020;font-weight:normal;-webkit-text-stroke:0.12px #202020">9</div>
<div class="t" style="left:432.00px;width:300px;text-align:right;top:233.10px;font-size:8.5px;line-height:8.5px;color:#202020;font-weight:normal;-webkit-text-stroke:0.12px #202020">1</div>
<div class="t" style="left:874.60px;top:233.02px;font-size:8.6px;line-height:8.6px;color:#202020;font-weight:normal;-webkit-text-stroke:0.12px #202020">computer</div>
<div class="t" style="left:20.00px;top:245.90px;font-size:8.5px;line-height:8.5px;color:#202020;font-weight:normal;-webkit-text-stroke:0.12px #202020">check in with solicitors</div>
<div class="t" style="left:215.20px;top:245.99px;font-size:8.4px;line-height:8.4px;color:#202020;font-weight:normal;-webkit-text-stroke:0.12px #202020">&lt;5 mins</div>
<div class="t" style="left:258.10px;top:245.90px;font-size:8.5px;line-height:8.5px;color:#202020;font-weight:normal;-webkit-text-stroke:0.12px #202020">N</div>
<div class="t" style="left:308.90px;top:245.90px;font-size:8.5px;line-height:8.5px;color:#202020;font-weight:normal;-webkit-text-stroke:0.12px #202020">N</div>
<div class="t" style="left:284.00px;width:200px;text-align:center;top:245.90px;font-size:8.5px;line-height:8.5px;color:#202020;font-weight:normal;-webkit-text-stroke:0.12px #202020">28</div>
<div class="t" style="left:418.90px;top:245.99px;font-size:8.4px;line-height:8.4px;color:#202020;font-weight:normal;-webkit-text-stroke:0.12px #202020">Family</div>
<div class="t" style="left:230.50px;width:300px;text-align:right;top:245.72px;font-size:8.72px;line-height:8.72px;color:#202020;font-weight:normal;-webkit-text-stroke:0.12px #202020">08/04/2024</div>
<div class="t" style="left:292.20px;width:300px;text-align:right;top:245.72px;font-size:8.72px;line-height:8.72px;color:#202020;font-weight:normal;-webkit-text-stroke:0.12px #202020">30/04/2024</div>
<div class="t" style="left:397.70px;width:300px;text-align:right;top:245.90px;font-size:8.5px;line-height:8.5px;color:#202020;font-weight:normal;-webkit-text-stroke:0.12px #202020">6</div>
<div class="t" style="left:432.00px;width:300px;text-align:right;top:245.90px;font-size:8.5px;line-height:8.5px;color:#202020;font-weight:normal;-webkit-text-stroke:0.12px #202020">n/a</div>
<div class="t" style="left:874.60px;top:245.82px;font-size:8.6px;line-height:8.6px;color:#202020;font-weight:normal;-webkit-text-stroke:0.12px #202020">computer</div>
<div class="t" style="left:215.20px;top:271.59px;font-size:8.4px;line-height:8.4px;color:#202020;font-weight:normal;-webkit-text-stroke:0.12px #202020">60mins+</div>
<div class="t" style="left:258.10px;top:271.50px;font-size:8.5px;line-height:8.5px;color:#202020;font-weight:normal;-webkit-text-stroke:0.12px #202020">Y</div>
<div class="t" style="left:308.90px;top:271.50px;font-size:8.5px;line-height:8.5px;color:#202020;font-weight:normal;-webkit-text-stroke:0.12px #202020">Y</div>
<div class="t" style="left:284.00px;width:200px;text-align:center;top:271.50px;font-size:8.5px;line-height:8.5px;color:#202020;font-weight:normal;-webkit-text-stroke:0.12px #202020">22</div>
<div class="t" style="left:418.90px;top:271.59px;font-size:8.4px;line-height:8.4px;color:#202020;font-weight:normal;-webkit-text-stroke:0.12px #202020">Garden</div>
<div class="t" style="left:230.50px;width:300px;text-align:right;top:271.32px;font-size:8.72px;line-height:8.72px;color:#202020;font-weight:normal;-webkit-text-stroke:0.12px #202020">13/04/2024</div>
<div class="t" style="left:292.20px;width:300px;text-align:right;top:271.32px;font-size:8.72px;line-height:8.72px;color:#202020;font-weight:normal;-webkit-text-stroke:0.12px #202020">30/04/2024</div>
<div class="t" style="left:397.70px;width:300px;text-align:right;top:271.50px;font-size:8.5px;line-height:8.5px;color:#202020;font-weight:normal;-webkit-text-stroke:0.12px #202020">4</div>
<div class="t" style="left:432.00px;width:300px;text-align:right;top:271.50px;font-size:8.5px;line-height:8.5px;color:#202020;font-weight:normal;-webkit-text-stroke:0.12px #202020">4</div>
<div class="t" style="left:874.60px;top:271.42px;font-size:8.6px;line-height:8.6px;color:#202020;font-weight:normal;-webkit-text-stroke:0.12px #202020">Outside</div>
<div class="t" style="left:215.20px;top:284.39px;font-size:8.4px;line-height:8.4px;color:#202020;font-weight:normal;-webkit-text-stroke:0.12px #202020">60mins+</div>
<div class="t" style="left:258.10px;top:284.30px;font-size:8.5px;line-height:8.5px;color:#202020;font-weight:normal;-webkit-text-stroke:0.12px #202020">Y</div>
<div class="t" style="left:308.90px;top:284.30px;font-size:8.5px;line-height:8.5px;color:#202020;font-weight:normal;-webkit-text-stroke:0.12px #202020">Y</div>
<div class="t" style="left:284.00px;width:200px;text-align:center;top:284.30px;font-size:8.5px;line-height:8.5px;color:#202020;font-weight:normal;-webkit-text-stroke:0.12px #202020">30</div>
<div class="t" style="left:418.90px;top:284.39px;font-size:8.4px;line-height:8.4px;color:#202020;font-weight:normal;-webkit-text-stroke:0.12px #202020">Craft</div>
<div class="t" style="left:230.50px;width:300px;text-align:right;top:284.12px;font-size:8.72px;line-height:8.72px;color:#202020;font-weight:normal;-webkit-text-stroke:0.12px #202020">13/04/2024</div>
<div class="t" style="left:292.20px;width:300px;text-align:right;top:284.12px;font-size:8.72px;line-height:8.72px;color:#202020;font-weight:normal;-webkit-text-stroke:0.12px #202020">30/04/2024</div>
<div class="t" style="left:397.70px;width:300px;text-align:right;top:284.30px;font-size:8.5px;line-height:8.5px;color:#202020;font-weight:normal;-webkit-text-stroke:0.12px #202020">3</div>
<div class="t" style="left:432.00px;width:300px;text-align:right;top:284.30px;font-size:8.5px;line-height:8.5px;color:#202020;font-weight:normal;-webkit-text-stroke:0.12px #202020">3</div>
<div class="t" style="left:874.60px;top:284.22px;font-size:8.6px;line-height:8.6px;color:#202020;font-weight:normal;-webkit-text-stroke:0.12px #202020">computer</div>
<div class="t" style="left:20.00px;top:297.10px;font-size:8.5px;line-height:8.5px;color:#202020;font-weight:normal;-webkit-text-stroke:0.12px #202020">repair buttonholes on loopy cardigan</div>
<div class="t" style="left:215.20px;top:297.19px;font-size:8.4px;line-height:8.4px;color:#202020;font-weight:normal;-webkit-text-stroke:0.12px #202020">30 mins</div>
<div class="t" style="left:258.10px;top:297.10px;font-size:8.5px;line-height:8.5px;color:#202020;font-weight:normal;-webkit-text-stroke:0.12px #202020">Y</div>
<div class="t" style="left:308.90px;top:297.10px;font-size:8.5px;line-height:8.5px;color:#202020;font-weight:normal;-webkit-text-stroke:0.12px #202020">Y</div>
<div class="t" style="left:284.00px;width:200px;text-align:center;top:297.10px;font-size:8.5px;line-height:8.5px;color:#202020;font-weight:normal;-webkit-text-stroke:0.12px #202020">27</div>
<div class="t" style="left:418.90px;top:297.19px;font-size:8.4px;line-height:8.4px;color:#202020;font-weight:normal;-webkit-text-stroke:0.12px #202020">Craft</div>
<div class="t" style="left:230.50px;width:300px;text-align:right;top:296.92px;font-size:8.72px;line-height:8.72px;color:#202020;font-weight:normal;-webkit-text-stroke:0.12px #202020">19/04/2024</div>
<div class="t" style="left:292.20px;width:300px;text-align:right;top:296.92px;font-size:8.72px;line-height:8.72px;color:#202020;font-weight:normal;-webkit-text-stroke:0.12px #202020">30/04/2024</div>
<div class="t" style="left:397.70px;width:300px;text-align:right;top:297.10px;font-size:8.5px;line-height:8.5px;color:#202020;font-weight:normal;-webkit-text-stroke:0.12px #202020">3</div>
<div class="t" style="left:432.00px;width:300px;text-align:right;top:297.10px;font-size:8.5px;line-height:8.5px;color:#202020;font-weight:normal;-webkit-text-stroke:0.12px #202020">n/a</div>
<div class="t" style="left:874.60px;top:297.02px;font-size:8.6px;line-height:8.6px;color:#202020;font-weight:normal;-webkit-text-stroke:0.12px #202020">sewing</div>
<div class="t" style="left:20.00px;top:309.90px;font-size:8.5px;line-height:8.5px;color:#202020;font-weight:normal;-webkit-text-stroke:0.12px #202020">clear out and organise work email inbox</div>
<div class="t" style="left:215.20px;top:309.99px;font-size:8.4px;line-height:8.4px;color:#202020;font-weight:normal;-webkit-text-stroke:0.12px #202020">60mins+</div>
<div class="t" style="left:258.10px;top:309.90px;font-size:8.5px;line-height:8.5px;color:#202020;font-weight:normal;-webkit-text-stroke:0.12px #202020">Y</div>
<div class="t" style="left:308.90px;top:309.90px;font-size:8.5px;line-height:8.5px;color:#202020;font-weight:normal;-webkit-text-stroke:0.12px #202020">Y</div>
<div class="t" style="left:284.00px;width:200px;text-align:center;top:309.90px;font-size:8.5px;line-height:8.5px;color:#202020;font-weight:normal;-webkit-text-stroke:0.12px #202020">14</div>
<div class="t" style="left:418.90px;top:309.99px;font-size:8.4px;line-height:8.4px;color:#202020;font-weight:normal;-webkit-text-stroke:0.12px #202020">Work</div>
<div class="t" style="left:230.50px;width:300px;text-align:right;top:309.72px;font-size:8.72px;line-height:8.72px;color:#202020;font-weight:normal;-webkit-text-stroke:0.12px #202020">19/04/2024</div>
<div class="t" style="left:292.20px;width:300px;text-align:right;top:309.72px;font-size:8.72px;line-height:8.72px;color:#202020;font-weight:normal;-webkit-text-stroke:0.12px #202020">30/04/2024</div>
<div class="t" style="left:397.70px;width:300px;text-align:right;top:309.90px;font-size:8.5px;line-height:8.5px;color:#202020;font-weight:normal;-webkit-text-stroke:0.12px #202020">1</div>
<div class="t" style="left:432.00px;width:300px;text-align:right;top:309.90px;font-size:8.5px;line-height:8.5px;color:#202020;font-weight:normal;-webkit-text-stroke:0.12px #202020">n/a</div>
<div class="t" style="left:874.60px;top:309.82px;font-size:8.6px;line-height:8.6px;color:#202020;font-weight:normal;-webkit-text-stroke:0.12px #202020">computer</div>
<div class="t" style="left:215.20px;top:322.79px;font-size:8.4px;line-height:8.4px;color:#202020;font-weight:normal;-webkit-text-stroke:0.12px #202020">60mins+</div>
<div class="t" style="left:258.10px;top:322.70px;font-size:8.5px;line-height:8.5px;color:#202020;font-weight:normal;-webkit-text-stroke:0.12px #202020">Y</div>
<div class="t" style="left:308.90px;top:322.70px;font-size:8.5px;line-height:8.5px;color:#202020;font-weight:normal;-webkit-text-stroke:0.12px #202020">Y</div>
<div class="t" style="left:284.00px;width:200px;text-align:center;top:322.70px;font-size:8.5px;line-height:8.5px;color:#202020;font-weight:normal;-webkit-text-stroke:0.12px #202020">21</div>
<div class="t" style="left:418.90px;top:322.79px;font-size:8.4px;line-height:8.4px;color:#202020;font-weight:normal;-webkit-text-stroke:0.12px #202020">Family</div>
<div class="t" style="left:230.50px;width:300px;text-align:right;top:322.52px;font-size:8.72px;line-height:8.72px;color:#202020;font-weight:normal;-webkit-text-stroke:0.12px #202020">19/04/2024</div>
<div class="t" style="left:292.20px;width:300px;text-align:right;top:322.52px;font-size:8.72px;line-height:8.72px;color:#202020;font-weight:normal;-webkit-text-stroke:0.12px #202020">30/04/2024</div>
<div class="t" style="left:397.70px;width:300px;text-align:right;top:322.70px;font-size:8.5px;line-height:8.5px;color:#202020;font-weight:normal;-webkit-text-stroke:0.12px #202020">6</div>
<div class="t" style="left:432.00px;width:300px;text-align:right;top:322.70px;font-size:8.5px;line-height:8.5px;color:#202020;font-weight:normal;-webkit-text-stroke:0.12px #202020">n/a</div>
<div class="t" style="left:874.60px;top:322.62px;font-size:8.6px;line-height:8.6px;color:#202020;font-weight:normal;-webkit-text-stroke:0.12px #202020">downstairs</div>
<div class="t" style="left:215.20px;top:335.59px;font-size:8.4px;line-height:8.4px;color:#202020;font-weight:normal;-webkit-text-stroke:0.12px #202020">15 mins</div>
<div class="t" style="left:258.10px;top:335.50px;font-size:8.5px;line-height:8.5px;color:#202020;font-weight:normal;-webkit-text-stroke:0.12px #202020">Y</div>
<div class="t" style="left:308.90px;top:335.50px;font-size:8.5px;line-height:8.5px;color:#202020;font-weight:normal;-webkit-text-stroke:0.12px #202020">N</div>
<div class="t" style="left:284.00px;width:200px;text-align:center;top:335.50px;font-size:8.5px;line-height:8.5px;color:#202020;font-weight:normal;-webkit-text-stroke:0.12px #202020">14</div>
<div class="t" style="left:418.90px;top:335.59px;font-size:8.4px;line-height:8.4px;color:#202020;font-weight:normal;-webkit-text-stroke:0.12px #202020">House</div>
<div class="t" style="left:230.50px;width:300px;text-align:right;top:335.32px;font-size:8.72px;line-height:8.72px;color:#202020;font-weight:normal;-webkit-text-stroke:0.12px #202020">19/04/2024</div>
<div class="t" style="left:292.20px;width:300px;text-align:right;top:335.32px;font-size:8.72px;line-height:8.72px;color:#202020;font-weight:normal;-webkit-text-stroke:0.12px #202020">30/04/2024</div>
<div class="t" style="left:397.70px;width:300px;text-align:right;top:335.50px;font-size:8.5px;line-height:8.5px;color:#202020;font-weight:normal;-webkit-text-stroke:0.12px #202020">5</div>
<div class="t" style="left:432.00px;width:300px;text-align:right;top:335.50px;font-size:8.5px;line-height:8.5px;color:#202020;font-weight:normal;-webkit-text-stroke:0.12px #202020">5</div>
<div class="t" style="left:874.60px;top:335.42px;font-size:8.6px;line-height:8.6px;color:#202020;font-weight:normal;-webkit-text-stroke:0.12px #202020">downstairs</div>
<div class="t" style="left:215.20px;top:348.39px;font-size:8.4px;line-height:8.4px;color:#202020;font-weight:normal;-webkit-text-stroke:0.12px #202020">60mins+</div>
<div class="t" style="left:258.10px;top:348.30px;font-size:8.5px;line-height:8.5px;color:#202020;font-weight:normal;-webkit-text-stroke:0.12px #202020">Y</div>
<div class="t" style="left:308.90px;top:348.30px;font-size:8.5px;line-height:8.5px;color:#202020;font-weight:normal;-webkit-text-stroke:0.12px #202020">N</div>
<div class="t" style="left:284.00px;width:200px;text-align:center;top:348.30px;font-size:8.5px;line-height:8.5px;color:#202020;font-weight:normal;-webkit-text-stroke:0.12px #202020">32</div>
<div class="t" style="left:418.90px;top:348.39px;font-size:8.4px;line-height:8.4px;color:#202020;font-weight:normal;-webkit-text-stroke:0.12px #202020">Health</div>
<div class="t" style="left:230.50px;width:300px;text-align:right;top:348.12px;font-size:8.72px;line-height:8.72px;color:#202020;font-weight:normal;-webkit-text-stroke:0.12px #202020">19/04/2024</div>
<div class="t" style="left:292.20px;width:300px;text-align:right;top:348.12px;font-size:8.72px;line-height:8.72px;color:#202020;font-weight:normal;-webkit-text-stroke:0.12px #202020">30/04/2024</div>
<div class="t" style="left:397.70px;width:300px;text-align:right;top:348.30px;font-size:8.5px;line-height:8.5px;color:#202020;font-weight:normal;-webkit-text-stroke:0.12px #202020">8</div>
<div class="t" style="left:432.00px;width:300px;text-align:right;top:348.30px;font-size:8.5px;line-height:8.5px;color:#202020;font-weight:normal;-webkit-text-stroke:0.12px #202020">2</div>
<div class="t" style="left:874.60px;top:348.22px;font-size:8.6px;line-height:8.6px;color:#202020;font-weight:normal;-webkit-text-stroke:0.12px #202020">computer</div>
<div class="t" style="left:196.50px;top:130.70px;font-size:8.5px;line-height:8.5px;color:#202020;font-weight:normal;-webkit-text-stroke:0.12px #202020">A</div>
<div class="t" style="left:142.50px;top:233.10px;font-size:8.5px;line-height:8.5px;color:#202020;font-weight:normal;-webkit-text-stroke:0.12px #202020">re</div>
<div class="t" style="left:172.50px;top:322.70px;font-size:8.5px;line-height:8.5px;color:#202020;font-weight:normal;-webkit-text-stroke:0.12px #202020">g</div>
<div class="t" style="left:100.00px;top:207.50px;font-size:8.5px;line-height:8.5px;color:#202020;font-weight:normal;-webkit-text-stroke:0.12px #202020">roduct</div>
<svg class="b" style="left:0;top:0" width="1010" height="360" viewBox="0 156.5 1010 360"><path d="M 27,178 C 40,176.5 70,176.5 80,178" fill="none" stroke="#0674d8" stroke-width="14" stroke-linecap="round" stroke-linejoin="round"/><path d="M 20,188.5 L 131,189" fill="none" stroke="#0674d8" stroke-width="11.5" stroke-linecap="round" stroke-linejoin="round"/><path d="M 24,201 L 142,201 C 160,201 168,204 172,209" fill="none" stroke="#0674d8" stroke-width="13" stroke-linecap="round" stroke-linejoin="round"/><path d="M 21,327 C 60,326 100,329 129,330" fill="none" stroke="#0674d8" stroke-width="11" stroke-linecap="round" stroke-linejoin="round"/><path d="M 22,354.6 L 109,354.2" fill="none" stroke="#0674d8" stroke-width="11.5" stroke-linecap="round" stroke-linejoin="round"/><path d="M 27,366.2 L 138,366.2" fill="none" stroke="#0674d8" stroke-width="15" stroke-linecap="round" stroke-linejoin="round"/><path d="M 137,374 C 125,381 100,381 27,381.5" fill="none" stroke="#0674d8" stroke-width="12" stroke-linecap="round" stroke-linejoin="round"/><path d="M 24,392.2 L 134,392.2" fill="none" stroke="#0674d8" stroke-width="12.4" stroke-linecap="round" stroke-linejoin="round"/><path d="M 26,418.5 L 186,418.5" fill="none" stroke="#0674d8" stroke-width="12" stroke-linecap="round" stroke-linejoin="round"/><path d="M 25,431 C 50,429 75,425 92,421" fill="none" stroke="#0674d8" stroke-width="11.5" stroke-linecap="round" stroke-linejoin="round"/><path d="M 88,421 C 110,426 130,431 148,431 C 160,430 170,426 180,421" fill="none" stroke="#0674d8" stroke-width="10.5" stroke-linecap="round" stroke-linejoin="round"/><path d="M 22,442 C 60,441 100,443 123,444.5" fill="none" stroke="#0674d8" stroke-width="12" stroke-linecap="round" stroke-linejoin="round"/><path d="M 24,287 C 60,287.8 120,287.8 166,285.4 C 182,283.9 194,283.5 197.5,288 C 200,292 197,296 193.6,297.5 C 180,301 166,303.4 127,307.3 C 100,308.5 60,308.3 24,307.5 C 17,307 14,300 16,294 C 17,289 20,287 24,287 Z" fill="#0674d8"/><path d="M 22,478 C 60,476 120,475 168,476 C 178,478 178,487 168,488 C 150,490 130,492 130,494 C 150,496 162,498 162,506 C 162,514 150,514 130,514 L 25,514 C 15,514 15,480 22,478 Z" fill="#0674d8"/><path d="M 22,482 L 160,481" stroke="#0674d8" stroke-width="10" stroke-linecap="round"/></svg>
</div>
<div class="b" style="left:1010.00px;top:144.00px;width:14.00px;height:369.00px;background:#f3f3f3"></div>
<svg class="b" style="left:1010.00px;top:144.00px;" width="14" height="12" viewBox="0 0 14 12"><polygon points="7,3 11,8.5 3,8.5" fill="#5f5f5f"/></svg>
<div class="b" style="left:1014.00px;top:155.30px;width:6.30px;height:98.60px;background:#6e6e6e;border-radius:3.2px"></div>
<svg class="b" style="left:1010.00px;top:500.00px;" width="14" height="12" viewBox="0 0 14 12"><polygon points="7,9 11,3.5 3,3.5" fill="#5f5f5f"/></svg>
<div class="b" style="left:0.00px;top:513.40px;width:1024.00px;height:36.00px;background:#f0f0f0"></div>
<div class="b" style="left:0.00px;top:534.90px;width:1024.00px;height:14.50px;background:#f4f4f4"></div>
<svg class="b" style="left:14.00px;top:519.00px;" width="10" height="10" viewBox="0 0 10 10"><path d="M6.5,1.5 L3,5 L6.5,8.5" fill="none" stroke="#a8a8a8" stroke-width="0.95"/></svg>
<svg class="b" style="left:36.00px;top:519.00px;" width="10" height="10" viewBox="0 0 10 10"><path d="M3.5,1.5 L7,5 L3.5,8.5" fill="none" stroke="#a8a8a8" stroke-width="0.95"/></svg>
<div class="b" style="left:75.80px;top:513.40px;width:64.00px;height:18.40px;background:linear-gradient(#fffafa,#fdd8d8 50%,#fa9e9e);border-radius:0 0 4px 4px;box-shadow:0 0.6px 1.2px rgba(0,0,0,0.14)"></div>
<div class="t" style="left:80.80px;top:517.97px;font-size:9.72px;line-height:9.72px;color:#2a2a2a;font-weight:normal;-webkit-text-stroke:0.25px #2a2a2a">Next Actions</div>
<div class="b" style="left:81.00px;top:529.50px;width:53.70px;height:1.40px;background:#5f8a4e"></div>
<div class="t" style="left:151.50px;top:520.48px;font-size:9.0px;line-height:9.0px;color:#454545;font-weight:normal;transform:scaleY(1.1);transform-origin:0 7.6px">H1 Projects</div>
<div class="t" style="left:216.00px;top:520.48px;font-size:9.0px;line-height:9.0px;color:#454545;font-weight:normal;transform:scaleY(1.1);transform-origin:0 7.6px">H2 Areas O.F.</div>
<div class="t" style="left:288.50px;top:520.48px;font-size:9.0px;line-height:9.0px;color:#454545;font-weight:normal;transform:scaleY(1.1);transform-origin:0 7.6px">H3 1-2y Goals</div>
<div class="t" style="left:364.00px;top:520.48px;font-size:9.0px;line-height:9.0px;color:#454545;font-weight:normal;transform:scaleY(1.1);transform-origin:0 7.6px">Someday-Maybe</div>
<div class="t" style="left:452.00px;top:520.48px;font-size:9.0px;line-height:9.0px;color:#454545;font-weight:normal;transform:scaleY(1.1);transform-origin:0 7.6px">regular tasks</div>
<div class="t" style="left:523.50px;top:520.48px;font-size:9.0px;line-height:9.0px;color:#454545;font-weight:normal;transform:scaleY(1.1);transform-origin:0 7.6px">Notes and Reference</div>
<div class="t" style="left:627.00px;top:520.48px;font-size:9.0px;line-height:9.0px;color:#454545;font-weight:normal;transform:scaleY(1.1);transform-origin:0 7.6px">completed</div>
<div class="t" style="left:689.00px;top:520.48px;font-size:9.0px;line-height:9.0px;color:#454545;font-weight:normal;transform:scaleY(1.1);transform-origin:0 7.6px">Wait</div>
<div class="t" style="left:725.00px;top:520.48px;font-size:9.0px;line-height:9.0px;color:#454545;font-weight:normal;transform:scaleY(1.1);transform-origin:0 7.6px">list data</div>
<div class="b" style="left:143.35px;top:518.50px;width:0.70px;height:12.00px;background:#d6d6d6"></div>
<div class="b" style="left:205.85px;top:518.50px;width:0.70px;height:12.00px;background:#d6d6d6"></div>
<div class="b" style="left:280.05px;top:518.50px;width:0.70px;height:12.00px;background:#d6d6d6"></div>
<div class="b" style="left:354.65px;top:518.50px;width:0.70px;height:12.00px;background:#d6d6d6"></div>
<div class="b" style="left:442.85px;top:518.50px;width:0.70px;height:12.00px;background:#d6d6d6"></div>
<div class="b" style="left:513.15px;top:518.50px;width:0.70px;height:12.00px;background:#d6d6d6"></div>
<div class="b" style="left:618.65px;top:518.50px;width:0.70px;height:12.00px;background:#d6d6d6"></div>
<div class="b" style="left:679.65px;top:518.50px;width:0.70px;height:12.00px;background:#d6d6d6"></div>
<div class="b" style="left:716.15px;top:518.50px;width:0.70px;height:12.00px;background:#d6d6d6"></div>
<svg class="b" style="left:794.00px;top:519.50px;" width="10" height="10" viewBox="0 0 10 10"><path d="M5,1 V9 M1,5 H9" stroke="#333" stroke-width="1"/></svg>
<svg class="b" style="left:851.50px;top:519.50px;" width="4" height="9" viewBox="0 0 4 9"><circle cx="1.6" cy="1.3" r="0.85" fill="#444"/><circle cx="1.6" cy="4.4" r="0.85" fill="#444"/><circle cx="1.6" cy="7.5" r="0.85" fill="#444"/></svg>
<div class="b" style="left:864.50px;top:519.00px;width:145.30px;height:10.00px;background:#e9e9e9;border-radius:5px"></div>
<svg class="b" style="left:866.00px;top:520.50px;" width="7" height="7" viewBox="0 0 7 7"><polygon points="1.3,3.5 5,0.8 5,6.2" fill="#555"/></svg>
<div class="b" style="left:875.20px;top:521.40px;width:24.30px;height:5.30px;background:#666;border-radius:2.6px"></div>
<svg class="b" style="left:1000.50px;top:520.50px;" width="7" height="7" viewBox="0 0 7 7"><polygon points="5.7,3.5 2,0.8 2,6.2" fill="#555"/></svg>
<div class="t" style="left:7.50px;top:539.52px;font-size:6.71px;line-height:6.71px;color:#666;font-weight:normal;">Ready</div>
<svg class="b" style="left:39.50px;top:538.00px;" width="11.5" height="9.5" viewBox="0 0 11.5 9.5"><rect x="0.6" y="0.6" width="10.2" height="8.2" fill="#e4e4e4" stroke="#777" stroke-width="0.8"/><circle cx="6.8" cy="5.5" r="2.3" fill="#fff" stroke="#555" stroke-width="0.8"/><circle cx="6.8" cy="5.5" r="0.9" fill="#222"/></svg>
<svg class="b" style="left:60.50px;top:537.50px;" width="11.5" height="10.5" viewBox="0 0 11.5 10.5"><circle cx="4.5" cy="1.6" r="1.2" fill="none" stroke="#555" stroke-width="0.8"/><path d="M1,3.8 H8 M4.5,3.8 V6.5 L2.5,10 M4.5,6.5 L6.5,10" fill="none" stroke="#555" stroke-width="0.8"/><path d="M7,7 L10.5,10.2 M10.5,7 L7,10.2" stroke="#555" stroke-width="0.8"/></svg>
<div class="t" style="left:73.10px;top:539.48px;font-size:6.76px;line-height:6.76px;color:#333;font-weight:bold;">Accessibility: Investigate</div>
<div class="t" style="left:678.30px;top:539.59px;font-size:6.75px;line-height:6.75px;color:#5a5a5a;font-weight:normal;">Average: 22721</div>
<div class="t" style="left:737.20px;top:539.59px;font-size:6.75px;line-height:6.75px;color:#5a5a5a;font-weight:normal;">Count: 11</div>
<div class="t" style="left:777.10px;top:539.59px;font-size:6.75px;line-height:6.75px;color:#5a5a5a;font-weight:normal;">Sum: 90884</div>
<div class="b" style="left:826.00px;top:533.80px;width:25.40px;height:15.00px;background:#e0e0e0"></div>
<svg class="b" style="left:834.00px;top:537.80px;" width="10" height="9" viewBox="0 0 10 9"><rect x="0.5" y="0.5" width="8.6" height="7.8" fill="none" stroke="#555" stroke-width="0.85"/><path d="M3.4,0.5 V8.3 M6.3,0.5 V8.3 M0.5,3.1 H9.1 M0.5,5.7 H9.1" stroke="#555" stroke-width="0.7"/></svg>
<svg class="b" style="left:860.50px;top:537.80px;" width="11" height="9" viewBox="0 0 11 9"><rect x="0.5" y="0.5" width="9.6" height="7.8" fill="none" stroke="#777" stroke-width="0.85"/><rect x="2.6" y="1.8" width="5.4" height="5.2" fill="none" stroke="#777" stroke-width="0.7"/></svg>
<svg class="b" style="left:886.50px;top:537.80px;" width="11" height="9" viewBox="0 0 11 9"><rect x="0.5" y="0.5" width="9.6" height="7.8" fill="none" stroke="#666" stroke-width="0.85"/><path d="M3.5,0.5 V4.5 H7 V0.5" fill="none" stroke="#666" stroke-width="0.85"/></svg>
<div class="b" style="left:909.80px;top:541.80px;width:4.70px;height:0.80px;background:#999"></div>
<div class="b" style="left:918.00px;top:541.90px;width:66.30px;height:0.80px;background:#a8a8a8"></div>
<div class="b" style="left:949.50px;top:538.30px;width:3.20px;height:7.60px;background:#555;border-radius:0.6px"></div>
<svg class="b" style="left:986.80px;top:539.00px;" width="6" height="6" viewBox="0 0 6 6"><path d="M3,0.5 V5.5 M0.5,3 H5.5" stroke="#999" stroke-width="0.8"/></svg>
<div class="t" style="left:1001.40px;top:539.77px;font-size:6.53px;line-height:6.53px;color:#5a5a5a;font-weight:normal;">100%</div>
<div class="b" style="left:0.00px;top:549.40px;width:1024.00px;height:26.60px;background:#111111"></div>
<svg class="b" style="left:9.50px;top:556.00px;" width="13.5" height="13" viewBox="0 0 13.5 13"><path d="M0.6,1.9 L5.9,1.2 V6.1 H0.6 Z M6.7,1.1 L12.6,0.3 V6.1 H6.7 Z M0.6,6.9 H5.9 V11.8 L0.6,11.1 Z M6.7,6.9 H12.6 V12.7 L6.7,11.9 Z" fill="#fff"/></svg>
<div class="b" style="left:31.90px;top:549.40px;width:192.10px;height:26.60px;background:#f1f1f1"></div>
<svg class="b" style="left:38.00px;top:556.00px;" width="14" height="14" viewBox="0 0 14 14"><circle cx="8.8" cy="5.6" r="4.1" fill="none" stroke="#333" stroke-width="1"/><path d="M5.9,8.5 L1.6,12.8" stroke="#333" stroke-width="1.1"/></svg>
<div class="t" style="left:59.40px;top:557.70px;font-size:9.8px;line-height:9.8px;color:#3c3c3c;font-weight:normal;">Type here to search</div>
<svg class="b" style="left:168.00px;top:549.40px;" width="56" height="26.6" viewBox="0 0 56 26.6"><ellipse cx="38" cy="30" rx="36" ry="9.5" fill="#6aae4c"/><ellipse cx="40" cy="24" rx="8" ry="1.6" fill="#4e8a38" opacity=".5"/><path d="M19,8.5 Q21,2.5 26.5,3 Q29,4 29.5,8 L31,14 Q36,11.5 41,12.5 Q45,14 44.5,18 L46,21 L44,21 L42.5,19 L42,24 L40,24.5 L39.5,19.5 Q35,20.5 32,20 L31.5,24.5 L29.5,24.8 L28.5,19 Q26,15 25.5,11 Q22,11 19,8.5 Z" fill="#e4c07a"/><path d="M17.5,8.5 Q18,7.3 19.3,8 L20,10.5 Q18.5,11 18.3,9.8 Z" fill="#e86f8a"/><path d="M27,13.5 L35,15.5 L38,14 M33,15 L34,19" fill="none" stroke="#8a5a2a" stroke-width="1.2"/><path d="M33,13 Q34,6 38,6 L37.5,8 Q35,9 35,13" fill="none" stroke="#a9b7d9" stroke-width="1"/><path d="M33.5,14.5 L37,12.5 L38,15.5 L34.5,17 Z" fill="#7ec0ee"/></svg>
<svg class="b" style="left:233.50px;top:556.50px;" width="13" height="12" viewBox="0 0 13 12"><path d="M0.8,0.8 H7.3 M0.8,11.2 H7.3" stroke="#ddd" stroke-width="1"/><rect x="1.8" y="3" width="4.6" height="6" fill="none" stroke="#ddd" stroke-width="1"/><path d="M10.5,0.3 V11.7" stroke="#ddd" stroke-width="1"/><path d="M9.5,5 H11.5 M9.5,7 H11.5" stroke="#ddd" stroke-width="0.7"/></svg>
<svg class="b" style="left:264.50px;top:554.00px;" width="18" height="18" viewBox="0 0 18 18"><path d="M6,4.5 V2.8 Q6,1.3 7.5,1.3 H10.5 Q12,1.3 12,2.8 V4.5" fill="none" stroke="#3f9fe8" stroke-width="1.3"/><rect x="1.3" y="4" width="15.4" height="12.7" rx="2.2" fill="#f4f4f4"/><rect x="6.8" y="8" width="2" height="2" fill="#f25022"/><rect x="9.2" y="8" width="2" height="2" fill="#7fba00"/><rect x="6.8" y="10.4" width="2" height="2" fill="#00a4ef"/><rect x="9.2" y="10.4" width="2" height="2" fill="#ffb900"/></svg>
<svg class="b" style="left:298.00px;top:554.50px;" width="18" height="15.5" viewBox="0 0 18 15.5"><path d="M3,1 Q1,7.7 3,14.5" fill="none" stroke="#35b8d8" stroke-width="1.2"/><path d="M15,1 Q17,7.7 15,14.5" fill="none" stroke="#35b8d8" stroke-width="1.2"/><path d="M4.5,2 L7.5,5 H10.5 L13.5,2 L13,10 L10,13.5 H8 L5,10 Z" fill="#5a5a5a"/><path d="M6.5,6.5 L8.5,8 M11.5,6.5 L9.5,8" stroke="#222" stroke-width="0.9"/></svg>
<svg class="b" style="left:332.00px;top:556.50px;" width="15" height="13.5" viewBox="0 0 15 13.5"><rect x="1" y="0.5" width="13" height="12.5" rx="1" fill="#6fb3e3"/><rect x="1" y="0.5" width="13" height="2" fill="#a9d4f2"/><circle cx="7" cy="7" r="4.6" fill="#f07c2a"/><path d="M5.6,4.6 L9.5,7 L5.6,9.4 Z" fill="#fff"/></svg>
<svg class="b" style="left:365.00px;top:555.50px;" width="17" height="14" viewBox="0 0 17 14"><path d="M0.5,2 Q0.5,1 1.5,1 H6 L7.5,2.5 H15.5 Q16.5,2.5 16.5,3.5 V4.5 H0.5 Z" fill="#e8a93c"/><rect x="0.5" y="4" width="16" height="9.8" rx="0.8" fill="#f8d45c"/><path d="M4.5,13.8 V9.5 H12.5 V13.8" fill="none" stroke="#2f7fd0" stroke-width="1.6"/></svg>
<div class="b" style="left:390.40px;top:549.40px;width:32.60px;height:26.60px;background:#2d2d2d"></div>
<div class="b" style="left:391.50px;top:574.30px;width:30.50px;height:1.70px;background:#9fc4ee;border-radius:1px"></div>
<svg class="b" style="left:397.00px;top:554.50px;" width="17.5" height="15.5" viewBox="0 0 17.5 15.5"><rect x="4" y="0.5" width="13" height="14.5" rx="1.2" fill="#107c41"/><rect x="10.5" y="0.5" width="6.5" height="7" fill="#33c481"/><rect x="10.5" y="7.5" width="6.5" height="7.5" fill="#21a366"/><rect x="0.5" y="3.5" width="9" height="8.5" rx="0.8" fill="#185c37"/><path d="M3,5.5 L7,10 M7,5.5 L3,10" stroke="#fff" stroke-width="1.2"/></svg>
<svg class="b" style="left:430.50px;top:554.50px;" width="17.5" height="15.5" viewBox="0 0 17.5 15.5"><rect x="4" y="0.5" width="13" height="14.5" rx="1.2" fill="#185abd"/><rect x="4" y="0.5" width="13" height="4" fill="#41a5ee"/><rect x="4" y="4.5" width="13" height="4" fill="#2b7cd3"/><rect x="0.5" y="3.5" width="9" height="8.5" rx="0.8" fill="#103f91"/><path d="M2,5.5 L3.2,10 L5,6.5 L6.8,10 L8,5.5" fill="none" stroke="#fff" stroke-width="0.9"/></svg>
<svg class="b" style="left:465.50px;top:553.80px;" width="13.5" height="17" viewBox="0 0 13.5 17"><rect x="0.5" y="0.5" width="12.5" height="16" rx="1.3" fill="#8c8c8c"/><rect x="2" y="2" width="9.5" height="3" fill="#5bc8ef"/><rect x="2" y="6.5" width="2.5" height="2" fill="#ddd"/><rect x="5.5" y="6.5" width="2.5" height="2" fill="#ddd"/><rect x="2" y="9.5" width="2.5" height="2" fill="#ddd"/><rect x="5.5" y="9.5" width="2.5" height="2" fill="#ddd"/><rect x="2" y="12.5" width="2.5" height="2" fill="#ddd"/><rect x="5.5" y="12.5" width="2.5" height="2" fill="#ddd"/><rect x="9" y="6.5" width="2.5" height="8" fill="#1f5fa8"/></svg>
<svg class="b" style="left:497.00px;top:554.50px;" width="17.5" height="16.5" viewBox="0 0 17.5 16.5"><circle cx="7.8" cy="7.8" r="7.5" fill="#8b2fd0"/><path d="M3.5,7.8 Q3.5,5.5 5.5,5.5 Q7,5.5 7.8,7.8 Q8.6,10 10,10 Q12,10 12,7.8 Q12,5.5 10,5.5 Q8.6,5.5 7.8,7.8 Q7,10 5.5,10 Q3.5,10 3.5,7.8 Z" fill="none" stroke="#fff" stroke-width="1.4"/><circle cx="13" cy="12" r="3.5" fill="#f7703a"/><circle cx="13" cy="12" r="1.8" fill="#7a3fd0"/></svg>
<svg class="b" style="left:530.50px;top:554.00px;" width="16.5" height="16.5" viewBox="0 0 16.5 16.5"><defs><radialGradient id="ffg" cx="0.3" cy="0.3" r="0.9"><stop offset="0" stop-color="#ffbd4f"/><stop offset="0.55" stop-color="#ff6a2a"/><stop offset="1" stop-color="#e22850"/></radialGradient></defs><circle cx="8.3" cy="8.8" r="7.4" fill="url(#ffg)"/><path d="M10,1 Q14,3 15.5,6 L12,5 Z" fill="#ffd43b"/><circle cx="8" cy="9.3" r="3.8" fill="#6b3fd8"/><path d="M4.3,8 Q5,4 9,4.5" fill="none" stroke="#ff9a3a" stroke-width="1.8"/></svg>
<svg class="b" style="left:563.00px;top:553.80px;" width="17.5" height="17.5" viewBox="0 0 17.5 17.5"><circle cx="8.7" cy="8.7" r="8" fill="#db4437"/><path d="M8.7,8.7 L15.63,12.7 A8,8 0 0 1 1.77,12.7 Z" fill="#0f9d58"/><path d="M8.7,8.7 L1.77,12.7 A8,8 0 0 1 8.7,0.7 Z" fill="#db4437"/><path d="M8.7,8.7 L8.7,0.7 A8,8 0 0 1 15.63,12.7 Z" fill="#fcc934"/><path d="M8.7,0.7 A8,8 0 0 0 1.77,12.7 L8.7,8.7 Z" fill="#db4437"/><path d="M1.77,12.7 A8,8 0 0 0 15.63,12.7 L8.7,8.7 Z" fill="#0f9d58"/><circle cx="8.7" cy="8.7" r="3.9" fill="#fff"/><circle cx="8.7" cy="8.7" r="3" fill="#1a73e8"/></svg>
<div class="b" style="left:558.00px;top:574.30px;width:27.60px;height:1.70px;background:#9fc4ee;border-radius:1px"></div>
<svg class="b" style="left:835.50px;top:558.50px;" width="11" height="7" viewBox="0 0 11 7"><path d="M1,6 L5.5,1.3 L10,6" fill="none" stroke="#e8e8e8" stroke-width="1"/></svg>
<svg class="b" style="left:852.50px;top:556.50px;" width="10.5" height="12" viewBox="0 0 10.5 12"><rect x="1" y="2" width="6" height="7.5" rx="2.5" fill="none" stroke="#ddd" stroke-width="1"/><path d="M7,4.5 L9.8,3 V8.5 L7,7" fill="none" stroke="#ddd" stroke-width="0.9"/><path d="M4,9.5 V11.5 M2,11.5 H6" stroke="#ddd" stroke-width="0.9"/></svg>
<svg class="b" style="left:866.50px;top:556.50px;" width="13" height="12" viewBox="0 0 13 12"><rect x="0.8" y="1" width="10.5" height="8" rx="1" fill="none" stroke="#ddd" stroke-width="1"/><path d="M3.5,6.5 L6,3.5 L8,5" fill="none" stroke="#ddd" stroke-width="0.9"/><circle cx="10" cy="9.5" r="2.2" fill="#3c8ee6"/></svg>
<svg class="b" style="left:883.00px;top:558.50px;" width="12.5" height="8" viewBox="0 0 12.5 8"><path d="M0.5,2.5 H2.5 M0.5,5 H2.5" stroke="#ddd" stroke-width="0.9"/><rect x="2.5" y="1" width="9.5" height="6" rx="0.8" fill="#ddd"/></svg>
<svg class="b" style="left:898.50px;top:557.50px;" width="12.5" height="10" viewBox="0 0 12.5 10"><path d="M1,3.5 H3 L6,1 V9 L3,6.5 H1 Z" fill="none" stroke="#ddd" stroke-width="0.95"/><path d="M7.8,3 L11.3,6.8 M11.3,3 L7.8,6.8" stroke="#ddd" stroke-width="0.9"/></svg>
<div class="t" style="left:928.50px;top:553.95px;font-size:7.27px;line-height:7.27px;color:#f2f2f2;font-weight:normal;">18:43</div>
<div class="t" style="left:917.40px;top:564.97px;font-size:8.07px;line-height:8.07px;color:#f2f2f2;font-weight:normal;">24/04/2024</div>
<svg class="b" style="left:968.50px;top:556.00px;" width="18" height="17" viewBox="0 0 18 17"><path d="M1.5,1.5 H12.5 V9.5 H6 L3.5,12 V9.5 H1.5 Z" fill="#f2f2f2"/><path d="M3.5,4 H10.5 M3.5,6.5 H10.5" stroke="#888" stroke-width="0.8"/><circle cx="12" cy="12" r="4.6" fill="#111" stroke="#ddd" stroke-width="0.9"/><text x="9.8" y="14.6" font-size="7" font-family="Liberation Sans" font-weight="bold" fill="#fff">2</text></svg>
<svg class="b" style="left:994.50px;top:555.00px;" width="16" height="15" viewBox="0 0 16 15"><path d="M3,1.5 Q1,2 1,6 L1.5,10 Q2,12.5 5,12 L8,11 L6.5,3 Q6,1 3,1.5 Z" fill="#3a96e8"/><path d="M8,2 Q10.5,1 12.5,3 L14.5,7 Q15.5,10 12.5,11 L8.5,11 L6.5,3 Z" fill="#e95fb5"/><path d="M5,7 L9.5,4.5 L11.5,9 L7,11.5 Z" fill="#5fd0a0" opacity=".85"/><rect x="8" y="9.5" width="7.5" height="4.8" rx="1" fill="#f6c62b"/><text x="8.6" y="13.3" font-size="3.8" font-family="Liberation Sans" font-weight="bold" fill="#222">PRO</text></svg>
</body></html>
